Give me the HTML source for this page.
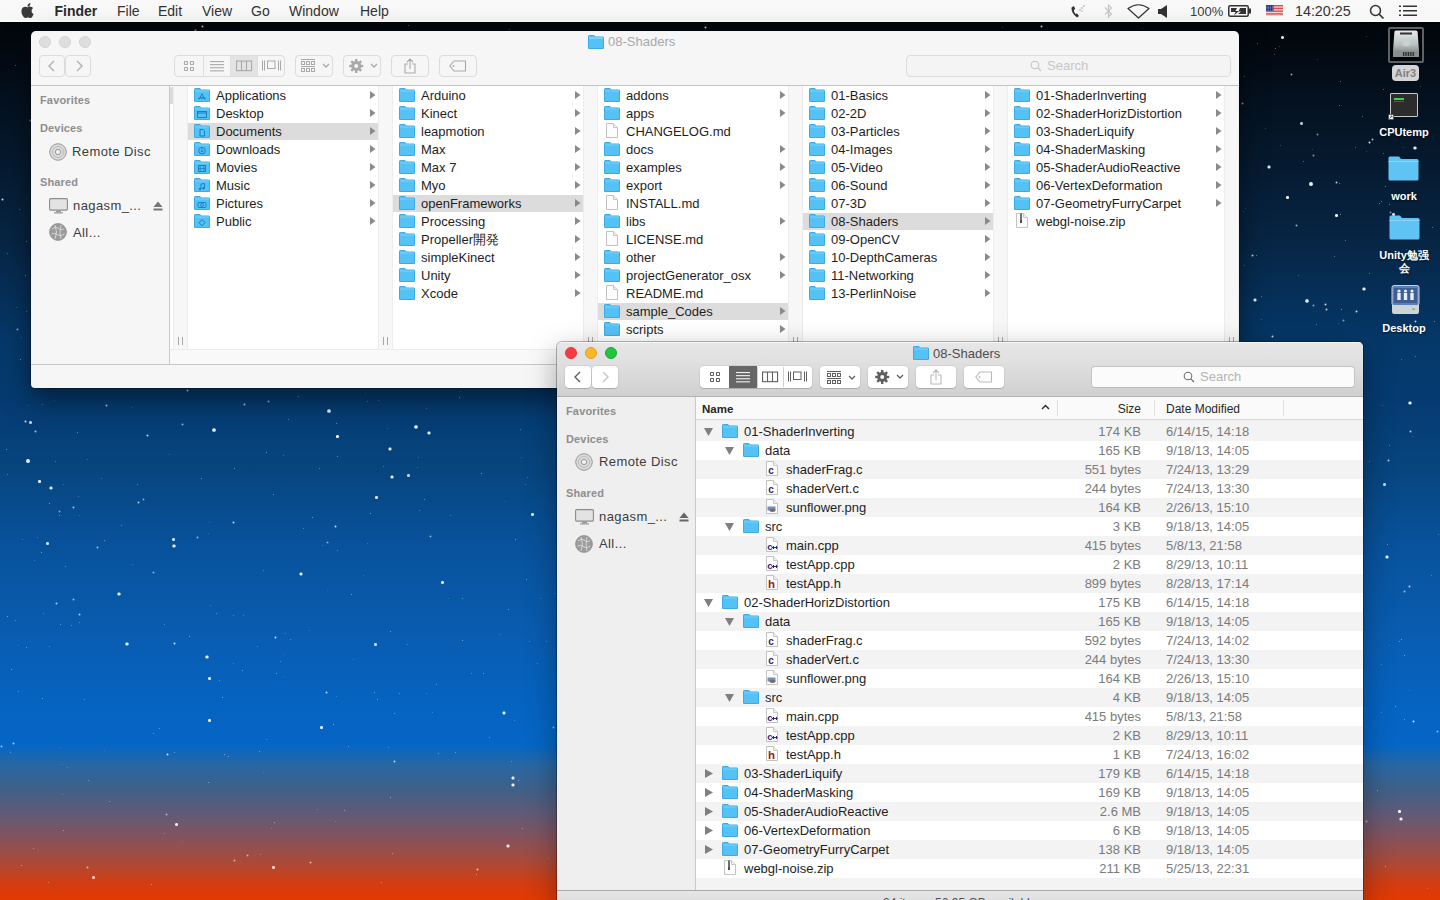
<!DOCTYPE html><html><head><meta charset="utf-8"><style>
*{margin:0;padding:0;box-sizing:border-box}
html,body{width:1440px;height:900px;overflow:hidden}
body{position:relative;font-family:"Liberation Sans",sans-serif;color:#1b1b1b;
background:linear-gradient(180deg,#010409 0px,#02080f 40px,#04111f 100px,#072544 240px,#053869 340px,#053b71 400px,#07457f 470px,#08519a 540px,#095db2 640px,#0563c0 700px,#0566c6 745px,#2867a2 765px,#406088 790px,#625a76 815px,#88525a 840px,#aa4a38 862px,#d43c10 884px,#e23a02 900px)}
.a{position:absolute}
.s{position:absolute;background:#fff;border-radius:50%}
#menubar{position:absolute;left:0;top:0;width:1440px;height:23px;background:linear-gradient(180deg,#f9f9f9 0,#f7f7f7 20px,#fff 21px,#fff 22px,#000 22px)}
.mi{position:absolute;top:3px;font-size:14px;line-height:16px;color:#333;white-space:nowrap}
.t{position:absolute;white-space:nowrap;font-size:13px;line-height:16px;color:#1e1e1e}
.win{position:absolute;overflow:hidden}
.tb{position:absolute;border-radius:4px}
.sh{position:absolute;font-size:11px;font-weight:bold;color:#8e8e8e;line-height:13px;white-space:nowrap;letter-spacing:0.15px}
.si{position:absolute;font-size:13px;color:#3d3d3d;line-height:16px;white-space:nowrap;letter-spacing:0.4px}
.dl{position:absolute;font-size:11px;font-weight:bold;color:#fff;line-height:13px;white-space:nowrap;text-align:center;text-shadow:0 1px 2px rgba(0,0,0,.6)}
</style></head><body><i style="position:absolute;left:0;top:0;width:1px;height:1px;border-radius:50%;box-shadow:466px 155px 0 0px rgba(255,255,255,0.23),772px 341px 0 0px rgba(255,255,255,0.40),54px 400px 0 0px rgba(255,255,255,0.24),611px 740px 0 0px rgba(255,255,255,0.29),904px 845px 0 0px rgba(255,255,255,0.59),67px 767px 0 0px rgba(255,255,255,0.26),170px 291px 0 0.5px rgba(255,255,255,0.56),838px 577px 0 0px rgba(255,255,255,0.42),90px 76px 0 0px rgba(255,255,255,0.47),616px 296px 0 0px rgba(255,255,255,0.38),432px 712px 0 0px rgba(255,255,255,0.30),827px 479px 0 0.5px rgba(255,255,255,0.76),602px 680px 0 0px rgba(255,255,255,0.40),56px 603px 0 0.5px rgba(255,255,255,0.70),1261px 296px 0 0px rgba(255,255,255,0.44),835px 419px 0 0.5px rgba(255,255,255,0.83),683px 599px 0 0px rgba(255,255,255,0.48),932px 884px 0 0px rgba(255,255,255,0.35),963px 44px 0 0px rgba(255,255,255,0.27),169px 75px 0 0.5px rgba(255,255,255,0.55),357px 363px 0 0.5px rgba(255,255,255,0.53),647px 500px 0 0.5px rgba(255,255,255,0.79),1244px 265px 0 0px rgba(255,255,255,0.34),254px 225px 0 0px rgba(255,255,255,0.39),848px 252px 0 0px rgba(255,255,255,0.37),532px 514px 0 1px rgba(255,255,255,0.92),742px 559px 0 0px rgba(255,255,255,0.22),1295px 699px 0 0.5px rgba(255,255,255,0.78),565px 370px 0 0px rgba(255,255,255,0.45),90px 82px 0 0px rgba(255,255,255,0.26),490px 70px 0 0px rgba(255,255,255,0.26),146px 339px 0 0px rgba(255,255,255,0.55),884px 153px 0 0px rgba(255,255,255,0.34),524px 130px 0 0.5px rgba(255,255,255,0.85),671px 443px 0 0px rgba(255,255,255,0.24),493px 253px 0 0.5px rgba(255,255,255,0.56),33px 848px 0 0px rgba(255,255,255,0.42),39px 481px 0 1px rgba(255,255,255,0.97),1003px 250px 0 0px rgba(255,255,255,0.27),1112px 485px 0 0.5px rgba(255,255,255,0.62),321px 727px 0 1px rgba(255,255,255,0.96),1161px 733px 0 0.5px rgba(255,255,255,0.58),745px 332px 0 0px rgba(255,255,255,0.21),402px 248px 0 0px rgba(255,255,255,0.58),644px 835px 0 1px rgba(255,255,255,0.84),317px 220px 0 0px rgba(255,255,255,0.28),899px 804px 0 0px rgba(255,255,255,0.46),1151px 97px 0 0px rgba(255,255,255,0.56),1127px 674px 0 0px rgba(255,255,255,0.27),1136px 312px 0 0.5px rgba(255,255,255,0.84),570px 372px 0 1px rgba(255,255,255,0.93),245px 134px 0 0px rgba(255,255,255,0.56),1161px 151px 0 0.5px rgba(255,255,255,0.84),946px 327px 0 0px rgba(255,255,255,0.25),21px 865px 0 0px rgba(255,255,255,0.57),625px 779px 0 0px rgba(255,255,255,0.30),422px 232px 0 0px rgba(255,255,255,0.30),603px 138px 0 0.5px rgba(255,255,255,0.62),660px 529px 0 0.5px rgba(255,255,255,0.65),1322px 458px 0 0px rgba(255,255,255,0.41),27px 405px 0 0px rgba(255,255,255,0.20),1151px 173px 0 0px rgba(255,255,255,0.49),801px 306px 0 0px rgba(255,255,255,0.42),1129px 116px 0 0px rgba(255,255,255,0.30),399px 693px 0 0px rgba(255,255,255,0.42),882px 462px 0 0px rgba(255,255,255,0.48),651px 486px 0 0px rgba(255,255,255,0.58),1007px 783px 0 0px rgba(255,255,255,0.42),1358px 751px 0 0px rgba(255,255,255,0.25),637px 87px 0 0px rgba(255,255,255,0.23),964px 703px 0 0.5px rgba(255,255,255,0.55),1031px 596px 0 0px rgba(255,255,255,0.55),1393px 214px 0 1px rgba(255,255,255,0.85),702px 881px 0 0px rgba(255,255,255,0.37),742px 318px 0 0px rgba(255,255,255,0.33),1040px 41px 0 0px rgba(255,255,255,0.38),26px 311px 0 0px rgba(255,255,255,0.40),93px 877px 0 1px rgba(255,255,255,0.78),382px 58px 0 0.5px rgba(255,255,255,0.59),187px 390px 0 0.5px rgba(255,255,255,0.79),372px 153px 0 0.5px rgba(255,255,255,0.70),1009px 101px 0 0px rgba(255,255,255,0.48),612px 87px 0 1px rgba(255,255,255,0.91),1154px 97px 0 0.5px rgba(255,255,255,0.52),1242px 417px 0 0px rgba(255,255,255,0.42),1334px 256px 0 0px rgba(255,255,255,0.41),343px 119px 0 0px rgba(255,255,255,0.22),291px 294px 0 0px rgba(255,255,255,0.50),418px 457px 0 0px rgba(255,255,255,0.34),26px 241px 0 0px rgba(255,255,255,0.49),794px 188px 0 0px rgba(255,255,255,0.57),153px 733px 0 0px rgba(255,255,255,0.40),1202px 364px 0 0px rgba(255,255,255,0.48),1415px 321px 0 0.5px rgba(255,255,255,0.75),916px 374px 0 0px rgba(255,255,255,0.22),187px 85px 0 0.5px rgba(255,255,255,0.59),235px 97px 0 0.5px rgba(255,255,255,0.80),966px 268px 0 0px rgba(255,255,255,0.32),662px 160px 0 0px rgba(255,255,255,0.31),1385px 866px 0 0px rgba(255,255,255,0.59),446px 333px 0 0px rgba(255,255,255,0.35),683px 459px 0 0px rgba(255,255,255,0.40),7px 253px 0 0px rgba(255,255,255,0.36),60px 43px 0 0px rgba(255,255,255,0.29),843px 482px 0 0.5px rgba(255,255,255,0.73),1043px 581px 0 0px rgba(255,255,255,0.53),1284px 567px 0 0.5px rgba(255,255,255,0.78),201px 478px 0 0px rgba(255,255,255,0.53),1159px 740px 0 0px rgba(255,255,255,0.56),983px 624px 0 0px rgba(255,255,255,0.21),192px 336px 0 0px rgba(255,255,255,0.53),804px 568px 0 0px rgba(255,255,255,0.47),705px 27px 0 0.5px rgba(255,255,255,0.76),724px 487px 0 0px rgba(255,255,255,0.23),1061px 242px 0 0px rgba(255,255,255,0.31),1050px 202px 0 0.5px rgba(255,255,255,0.84),711px 355px 0 0px rgba(255,255,255,0.47),1104px 558px 0 0px rgba(255,255,255,0.23),212px 244px 0 0.5px rgba(255,255,255,0.61),818px 35px 0 0px rgba(255,255,255,0.31),968px 623px 0 0px rgba(255,255,255,0.32),744px 426px 0 0px rgba(255,255,255,0.25),1287px 197px 0 1px rgba(255,255,255,0.98),25px 421px 0 0.5px rgba(255,255,255,0.84),647px 257px 0 0px rgba(255,255,255,0.58),303px 528px 0 0px rgba(255,255,255,0.41),1372px 139px 0 0.5px rgba(255,255,255,0.68),1277px 633px 0 0px rgba(255,255,255,0.56),700px 46px 0 0px rgba(255,255,255,0.40),649px 285px 0 0px rgba(255,255,255,0.34),455px 752px 0 0px rgba(255,255,255,0.50),1208px 128px 0 1px rgba(255,255,255,0.93),1298px 275px 0 0px rgba(255,255,255,0.36),1438px 534px 0 0px rgba(255,255,255,0.37),396px 66px 0 0px rgba(255,255,255,0.53),383px 466px 0 0px rgba(255,255,255,0.35),1377px 790px 0 0px rgba(255,255,255,0.57),1355px 500px 0 0.5px rgba(255,255,255,0.52),1055px 414px 0 0.5px rgba(255,255,255,0.73),412px 66px 0 1px rgba(255,255,255,0.78),680px 322px 0 0px rgba(255,255,255,0.50),1406px 249px 0 0px rgba(255,255,255,0.32),803px 366px 0 0px rgba(255,255,255,0.26),317px 809px 0 0px rgba(255,255,255,0.26),277px 103px 0 0px rgba(255,255,255,0.24),344px 248px 0 0px rgba(255,255,255,0.55),1080px 381px 0 0px rgba(255,255,255,0.41),543px 317px 0 0px rgba(255,255,255,0.31),1393px 133px 0 0px rgba(255,255,255,0.45),1243px 211px 0 0px rgba(255,255,255,0.30),576px 410px 0 1px rgba(255,255,255,0.96),1257px 43px 0 0px rgba(255,255,255,0.48),1290px 434px 0 0px rgba(255,255,255,0.20),564px 827px 0 0.5px rgba(255,255,255,0.84),358px 118px 0 0px rgba(255,255,255,0.41),982px 839px 0 0px rgba(255,255,255,0.51),659px 502px 0 0px rgba(255,255,255,0.51),335px 821px 0 0px rgba(255,255,255,0.25),363px 575px 0 0px rgba(255,255,255,0.24),101px 478px 0 0px rgba(255,255,255,0.36),322px 545px 0 0px rgba(255,255,255,0.32),663px 854px 0 0.5px rgba(255,255,255,0.67),338px 238px 0 1px rgba(255,255,255,0.93),443px 43px 0 0px rgba(255,255,255,0.47),605px 247px 0 0px rgba(255,255,255,0.57),327px 54px 0 0px rgba(255,255,255,0.37),983px 196px 0 0.5px rgba(255,255,255,0.76),727px 202px 0 1px rgba(255,255,255,0.83),1181px 224px 0 0px rgba(255,255,255,0.50),270px 217px 0 0px rgba(255,255,255,0.47),1366px 151px 0 0px rgba(255,255,255,0.29),1403px 147px 0 0px rgba(255,255,255,0.22),566px 802px 0 0.5px rgba(255,255,255,0.85),1341px 309px 0 0px rgba(255,255,255,0.57),1075px 52px 0 0px rgba(255,255,255,0.35),538px 311px 0 0px rgba(255,255,255,0.20),403px 328px 0 1px rgba(255,255,255,0.78),1389px 204px 0 0px rgba(255,255,255,0.53),1184px 399px 0 0px rgba(255,255,255,0.39),592px 727px 0 0.5px rgba(255,255,255,0.51),50px 78px 0 1px rgba(255,255,255,0.81),392px 853px 0 0px rgba(255,255,255,0.49),456px 263px 0 0px rgba(255,255,255,0.50),1320px 573px 0 1px rgba(255,255,255,0.76),337px 436px 0 1px rgba(255,255,255,0.99),557px 241px 0 0px rgba(255,255,255,0.40),1336px 182px 0 0.5px rgba(255,255,255,0.76),1185px 693px 0 0px rgba(255,255,255,0.33),460px 337px 0 0.5px rgba(255,255,255,0.53),284px 676px 0 0px rgba(255,255,255,0.23),49px 503px 0 0px rgba(255,255,255,0.59),121px 108px 0 0px rgba(255,255,255,0.48),644px 227px 0 0px rgba(255,255,255,0.45),971px 672px 0 0.5px rgba(255,255,255,0.73),174px 752px 0 0px rgba(255,255,255,0.43),537px 663px 0 0px rgba(255,255,255,0.30),353px 157px 0 0.5px rgba(255,255,255,0.70),470px 367px 0 1px rgba(255,255,255,0.88),333px 724px 0 0px rgba(255,255,255,0.60),147px 435px 0 0.5px rgba(255,255,255,0.79),1317px 59px 0 0px rgba(255,255,255,0.25),273px 867px 0 1px rgba(255,255,255,0.84),1247px 413px 0 0px rgba(255,255,255,0.51),1362px 116px 0 0px rgba(255,255,255,0.45),313px 343px 0 0px rgba(255,255,255,0.28),367px 543px 0 0px rgba(255,255,255,0.28),16px 307px 0 0px rgba(255,255,255,0.27),450px 200px 0 0.5px rgba(255,255,255,0.69),91px 112px 0 0px rgba(255,255,255,0.42),920px 103px 0 0px rgba(255,255,255,0.48),590px 269px 0 0px rgba(255,255,255,0.58),450px 515px 0 0px rgba(255,255,255,0.37),284px 654px 0 0px rgba(255,255,255,0.20),1298px 391px 0 0.5px rgba(255,255,255,0.64),1271px 423px 0 0px rgba(255,255,255,0.21),794px 579px 0 0.5px rgba(255,255,255,0.53),896px 345px 0 0px rgba(255,255,255,0.26),408px 475px 0 1px rgba(255,255,255,0.78),706px 721px 0 1px rgba(255,255,255,0.80),182px 841px 0 0px rgba(255,255,255,0.22),1334px 360px 0 0.5px rgba(255,255,255,0.72),1187px 163px 0 0.5px rgba(255,255,255,0.58),582px 757px 0 0.5px rgba(255,255,255,0.56),314px 370px 0 0px rgba(255,255,255,0.35),177px 238px 0 0.5px rgba(255,255,255,0.81),59px 511px 0 0.5px rgba(255,255,255,0.51),1207px 126px 0 0px rgba(255,255,255,0.42),903px 289px 0 0px rgba(255,255,255,0.43),613px 595px 0 0px rgba(255,255,255,0.38),34px 560px 0 0px rgba(255,255,255,0.29),1100px 699px 0 0px rgba(255,255,255,0.27),681px 117px 0 0px rgba(255,255,255,0.37),132px 407px 0 0px rgba(255,255,255,0.22),916px 95px 0 0.5px rgba(255,255,255,0.77),737px 71px 0 0px rgba(255,255,255,0.35),1369px 142px 0 0.5px rgba(255,255,255,0.85),1054px 730px 0 0px rgba(255,255,255,0.59),708px 852px 0 0px rgba(255,255,255,0.52),1340px 81px 0 0px rgba(255,255,255,0.50),1175px 148px 0 0px rgba(255,255,255,0.57),300px 252px 0 0px rgba(255,255,255,0.33),53px 182px 0 0px rgba(255,255,255,0.57),1130px 124px 0 0px rgba(255,255,255,0.45),518px 780px 0 0px rgba(255,255,255,0.55),151px 884px 0 0px rgba(255,255,255,0.52),381px 882px 0 0px rgba(255,255,255,0.51),637px 177px 0 0.5px rgba(255,255,255,0.52),1181px 244px 0 0px rgba(255,255,255,0.59),844px 599px 0 0px rgba(255,255,255,0.20),49px 153px 0 0px rgba(255,255,255,0.37),327px 590px 0 0px rgba(255,255,255,0.20),511px 116px 0 0px rgba(255,255,255,0.29),840px 534px 0 0px rgba(255,255,255,0.45),684px 141px 0 1px rgba(255,255,255,0.81),215px 107px 0 0px rgba(255,255,255,0.55),1126px 372px 0 0px rgba(255,255,255,0.20),929px 511px 0 0px rgba(255,255,255,0.46),639px 836px 0 0px rgba(255,255,255,0.56),63px 484px 0 0px rgba(255,255,255,0.30),84px 699px 0 0px rgba(255,255,255,0.42),1355px 147px 0 0px rgba(255,255,255,0.44),730px 580px 0 0.5px rgba(255,255,255,0.56),446px 284px 0 0px rgba(255,255,255,0.56),1127px 644px 0 0px rgba(255,255,255,0.54),1073px 427px 0 0.5px rgba(255,255,255,0.66),325px 115px 0 0px rgba(255,255,255,0.22),483px 673px 0 0px rgba(255,255,255,0.54),1025px 254px 0 0px rgba(255,255,255,0.37),1135px 477px 0 0px rgba(255,255,255,0.46),1390px 212px 0 0.5px rgba(255,255,255,0.51),375px 228px 0 0.5px rgba(255,255,255,0.83),1074px 307px 0 0.5px rgba(255,255,255,0.61),344px 810px 0 0px rgba(255,255,255,0.47),1410px 431px 0 0.5px rgba(255,255,255,0.74),1235px 403px 0 0.5px rgba(255,255,255,0.70),443px 208px 0 0px rgba(255,255,255,0.23),1312px 149px 0 0px rgba(255,255,255,0.24),1338px 323px 0 0px rgba(255,255,255,0.21),60px 624px 0 0px rgba(255,255,255,0.48),1061px 81px 0 0px rgba(255,255,255,0.35),1177px 734px 0 0.5px rgba(255,255,255,0.52),1250px 816px 0 0px rgba(255,255,255,0.28),161px 54px 0 0.5px rgba(255,255,255,0.78),913px 739px 0 0px rgba(255,255,255,0.31),144px 109px 0 0.5px rgba(255,255,255,0.57),460px 391px 0 0px rgba(255,255,255,0.30),407px 644px 0 0px rgba(255,255,255,0.33),1388px 460px 0 0.5px rgba(255,255,255,0.72),45px 382px 0 0px rgba(255,255,255,0.51),499px 634px 0 0px rgba(255,255,255,0.29),1242px 103px 0 0.5px rgba(255,255,255,0.56),2px 199px 0 0.5px rgba(255,255,255,0.84),6px 449px 0 0px rgba(255,255,255,0.52),266px 452px 0 0px rgba(255,255,255,0.53),309px 630px 0 0px rgba(255,255,255,0.24),917px 94px 0 0.5px rgba(255,255,255,0.74),1133px 568px 0 0px rgba(255,255,255,0.36),1279px 46px 0 0px rgba(255,255,255,0.31),1298px 458px 0 0px rgba(255,255,255,0.55),336px 423px 0 0px rgba(255,255,255,0.50),1084px 584px 0 0px rgba(255,255,255,0.33),224px 754px 0 0px rgba(255,255,255,0.50),244px 404px 0 0.5px rgba(255,255,255,0.70),182px 424px 0 0.5px rgba(255,255,255,0.58),276px 285px 0 0.5px rgba(255,255,255,0.80),223px 159px 0 0px rgba(255,255,255,0.33),752px 163px 0 0px rgba(255,255,255,0.28),1404px 655px 0 0px rgba(255,255,255,0.58),146px 357px 0 1px rgba(255,255,255,0.95),1056px 401px 0 0px rgba(255,255,255,0.46),154px 203px 0 0px rgba(255,255,255,0.21),575px 709px 0 0px rgba(255,255,255,0.40),911px 425px 0 0px rgba(255,255,255,0.44),583px 666px 0 0.5px rgba(255,255,255,0.65),827px 673px 0 0px rgba(255,255,255,0.29),1040px 786px 0 0.5px rgba(255,255,255,0.80),979px 580px 0 0px rgba(255,255,255,0.33),905px 109px 0 0px rgba(255,255,255,0.51),1027px 569px 0 0px rgba(255,255,255,0.37),655px 562px 0 0px rgba(255,255,255,0.47),1339px 183px 0 0px rgba(255,255,255,0.51),560px 448px 0 1px rgba(255,255,255,0.76),782px 163px 0 0.5px rgba(255,255,255,0.83),748px 112px 0 0px rgba(255,255,255,0.42),1033px 468px 0 0px rgba(255,255,255,0.53),751px 379px 0 1px rgba(255,255,255,0.80),985px 364px 0 0.5px rgba(255,255,255,0.54),1418px 332px 0 0px rgba(255,255,255,0.31),576px 36px 0 0px rgba(255,255,255,0.37),1005px 329px 0 0px rgba(255,255,255,0.29),1068px 838px 0 0px rgba(255,255,255,0.52),564px 208px 0 0px rgba(255,255,255,0.51),1166px 573px 0 0px rgba(255,255,255,0.42),920px 733px 0 0.5px rgba(255,255,255,0.66),424px 499px 0 0px rgba(255,255,255,0.53),511px 761px 0 0px rgba(255,255,255,0.35),365px 393px 0 0px rgba(255,255,255,0.20),1039px 268px 0 0px rgba(255,255,255,0.32),691px 395px 0 0px rgba(255,255,255,0.46),522px 828px 0 0px rgba(255,255,255,0.53),1304px 703px 0 0px rgba(255,255,255,0.53),912px 37px 0 0px rgba(255,255,255,0.58),945px 241px 0 0px rgba(255,255,255,0.26),336px 696px 0 0px rgba(255,255,255,0.26),1302px 710px 0 0px rgba(255,255,255,0.56),876px 701px 0 0px rgba(255,255,255,0.56),1135px 750px 0 0px rgba(255,255,255,0.48),764px 666px 0 0px rgba(255,255,255,0.55),799px 253px 0 0px rgba(255,255,255,0.26),710px 75px 0 0px rgba(255,255,255,0.26),708px 455px 0 0px rgba(255,255,255,0.55),10px 752px 0 0px rgba(255,255,255,0.43),958px 752px 0 0px rgba(255,255,255,0.37),1383px 89px 0 0px rgba(255,255,255,0.45),41px 552px 0 0px rgba(255,255,255,0.57),476px 874px 0 0px rgba(255,255,255,0.56),49px 646px 0 0px rgba(255,255,255,0.34),1241px 341px 0 0px rgba(255,255,255,0.41),1110px 206px 0 0px rgba(255,255,255,0.37),798px 740px 0 0px rgba(255,255,255,0.53),581px 460px 0 0px rgba(255,255,255,0.40),1404px 591px 0 0.5px rgba(255,255,255,0.62),457px 283px 0 0px rgba(255,255,255,0.45),1129px 59px 0 0.5px rgba(255,255,255,0.81),785px 67px 0 0px rgba(255,255,255,0.20),274px 822px 0 0px rgba(255,255,255,0.52),1310px 554px 0 0px rgba(255,255,255,0.45),1003px 540px 0 0px rgba(255,255,255,0.29),960px 421px 0 0.5px rgba(255,255,255,0.54),261px 56px 0 0.5px rgba(255,255,255,0.82),944px 343px 0 0.5px rgba(255,255,255,0.78),809px 247px 0 0px rgba(255,255,255,0.37),459px 397px 0 0px rgba(255,255,255,0.57),79px 515px 0 0px rgba(255,255,255,0.25),1167px 522px 0 0.5px rgba(255,255,255,0.66),20px 359px 0 0px rgba(255,255,255,0.58),1412px 436px 0 0px rgba(255,255,255,0.24),928px 208px 0 0px rgba(255,255,255,0.21),7px 616px 0 0px rgba(255,255,255,0.59),26px 647px 0 0px rgba(255,255,255,0.49),270px 67px 0 0.5px rgba(255,255,255,0.75),1232px 656px 0 0px rgba(255,255,255,0.45),1021px 423px 0 1px rgba(255,255,255,0.81),1389px 645px 0 0px rgba(255,255,255,0.21),937px 732px 0 0px rgba(255,255,255,0.32),1050px 168px 0 0.5px rgba(255,255,255,0.67),86px 342px 0 0px rgba(255,255,255,0.38),975px 149px 0 0.5px rgba(255,255,255,0.63),929px 569px 0 0px rgba(255,255,255,0.35),1132px 842px 0 0px rgba(255,255,255,0.32),87px 867px 0 0.5px rgba(255,255,255,0.62),872px 870px 0 0px rgba(255,255,255,0.32),986px 545px 0 0.5px rgba(255,255,255,0.78),408px 25px 0 0px rgba(255,255,255,0.37),845px 731px 0 0.5px rgba(255,255,255,0.51),1200px 727px 0 0.5px rgba(255,255,255,0.70),394px 761px 0 0.5px rgba(255,255,255,0.74),1316px 324px 0 0px rgba(255,255,255,0.42),1148px 198px 0 0.5px rgba(255,255,255,0.83),337px 550px 0 0px rgba(255,255,255,0.39),297px 245px 0 0.5px rgba(255,255,255,0.78),662px 100px 0 0.5px rgba(255,255,255,0.77),335px 526px 0 0.5px rgba(255,255,255,0.81),751px 437px 0 0px rgba(255,255,255,0.28),277px 180px 0 0.5px rgba(255,255,255,0.63),813px 373px 0 0px rgba(255,255,255,0.26),153px 572px 0 0.5px rgba(255,255,255,0.55),860px 323px 0 0px rgba(255,255,255,0.21),48px 882px 0 0px rgba(255,255,255,0.43),377px 699px 0 0px rgba(255,255,255,0.58),1105px 733px 0 1px rgba(255,255,255,0.81),55px 198px 0 0px rgba(255,255,255,0.23),73px 507px 0 0.5px rgba(255,255,255,0.66),861px 368px 0 0px rgba(255,255,255,0.58),370px 513px 0 0px rgba(255,255,255,0.58),964px 364px 0 0px rgba(255,255,255,0.26),56px 246px 0 0px rgba(255,255,255,0.56),1303px 749px 0 0px rgba(255,255,255,0.51),1022px 584px 0 1px rgba(255,255,255,0.76),209px 678px 0 1px rgba(255,255,255,0.92),430px 536px 0 0.5px rgba(255,255,255,0.54),466px 247px 0 0px rgba(255,255,255,0.39),243px 231px 0 0px rgba(255,255,255,0.47),18px 645px 0 0px rgba(255,255,255,0.21),1336px 215px 0 1px rgba(255,255,255,0.97),1280px 145px 0 0px rgba(255,255,255,0.24),1337px 753px 0 0px rgba(255,255,255,0.38),489px 737px 0 0px rgba(255,255,255,0.45),206px 216px 0 0px rgba(255,255,255,0.49),797px 149px 0 0.5px rgba(255,255,255,0.59),593px 159px 0 0px rgba(255,255,255,0.54),482px 169px 0 0px rgba(255,255,255,0.33),1301px 123px 0 1px rgba(255,255,255,0.76),1289px 603px 0 0px rgba(255,255,255,0.39),412px 247px 0 0px rgba(255,255,255,0.35),1427px 888px 0 0px rgba(255,255,255,0.32),1291px 74px 0 0.5px rgba(255,255,255,0.60),1409px 38px 0 0.5px rgba(255,255,255,0.62),202px 26px 0 0.5px rgba(255,255,255,0.68),268px 401px 0 0.5px rgba(255,255,255,0.58),823px 144px 0 0px rgba(255,255,255,0.51),1025px 194px 0 0px rgba(255,255,255,0.23),876px 453px 0 0px rgba(255,255,255,0.28),882px 637px 0 0.5px rgba(255,255,255,0.70),291px 81px 0 0.5px rgba(255,255,255,0.64),1039px 72px 0 0.5px rgba(255,255,255,0.62),1256px 255px 0 0px rgba(255,255,255,0.53),529px 166px 0 0px rgba(255,255,255,0.44),7px 474px 0 0px rgba(255,255,255,0.41),174px 643px 0 0.5px rgba(255,255,255,0.80),462px 640px 0 0px rgba(255,255,255,0.50),88px 780px 0 0px rgba(255,255,255,0.41),764px 489px 0 0px rgba(255,255,255,0.59),322px 182px 0 0px rgba(255,255,255,0.30),1177px 50px 0 0px rgba(255,255,255,0.48),281px 39px 0 0px rgba(255,255,255,0.43),753px 632px 0 0px rgba(255,255,255,0.55),1033px 63px 0 0px rgba(255,255,255,0.40),721px 266px 0 0px rgba(255,255,255,0.36),197px 537px 0 0.5px rgba(255,255,255,0.55),825px 671px 0 0px rgba(255,255,255,0.53),1350px 361px 0 0px rgba(255,255,255,0.54),757px 367px 0 1px rgba(255,255,255,0.94),488px 232px 0 0px rgba(255,255,255,0.37),1413px 721px 0 0.5px rgba(255,255,255,0.79),1221px 70px 0 0px rgba(255,255,255,0.58),1345px 240px 0 0px rgba(255,255,255,0.45),525px 484px 0 0px rgba(255,255,255,0.37),727px 42px 0 0px rgba(255,255,255,0.59),1118px 835px 0 0.5px rgba(255,255,255,0.81),1274px 54px 0 0px rgba(255,255,255,0.31),977px 261px 0 0px rgba(255,255,255,0.57),895px 241px 0 0px rgba(255,255,255,0.37),1369px 273px 0 0px rgba(255,255,255,0.46),173px 539px 0 1px rgba(255,255,255,0.88),387px 428px 0 0px rgba(255,255,255,0.26),178px 138px 0 0px rgba(255,255,255,0.36),415px 235px 0 0px rgba(255,255,255,0.42),1209px 552px 0 0px rgba(255,255,255,0.46),290px 639px 0 0px rgba(255,255,255,0.42),882px 430px 0 0px rgba(255,255,255,0.30),319px 468px 0 0px rgba(255,255,255,0.43),17px 329px 0 0.5px rgba(255,255,255,0.58),802px 450px 0 0px rgba(255,255,255,0.60),426px 693px 0 0px rgba(255,255,255,0.23),1255px 405px 0 0px rgba(255,255,255,0.36),633px 661px 0 0px rgba(255,255,255,0.29),1381px 664px 0 0px rgba(255,255,255,0.33),508px 609px 0 0px rgba(255,255,255,0.54),1183px 472px 0 0.5px rgba(255,255,255,0.76),1094px 436px 0 0.5px rgba(255,255,255,0.75),1317px 134px 0 0.5px rgba(255,255,255,0.50),1103px 531px 0 0px rgba(255,255,255,0.59),824px 386px 0 0.5px rgba(255,255,255,0.81),875px 353px 0 0px rgba(255,255,255,0.38),1041px 278px 0 0px rgba(255,255,255,0.42),554px 303px 0 0.5px rgba(255,255,255,0.80),719px 409px 0 0px rgba(255,255,255,0.32),209px 522px 0 0px rgba(255,255,255,0.24),1325px 304px 0 0.5px rgba(255,255,255,0.79),1381px 201px 0 0px rgba(255,255,255,0.56),15px 65px 0 0px rgba(255,255,255,0.40),1325px 694px 0 0px rgba(255,255,255,0.60),745px 472px 0 0px rgba(255,255,255,0.36),515px 539px 0 0px rgba(255,255,255,0.58),974px 479px 0 0px rgba(255,255,255,0.35),577px 510px 0 0px rgba(255,255,255,0.55),1389px 445px 0 0px rgba(255,255,255,0.45),1434px 321px 0 0px rgba(255,255,255,0.53),246px 299px 0 1px rgba(255,255,255,0.96),738px 120px 0 0.5px rgba(255,255,255,0.74),1182px 882px 0 0px rgba(255,255,255,0.26),417px 467px 0 0px rgba(255,255,255,0.28),263px 570px 0 0px rgba(255,255,255,0.34),1431px 575px 0 0px rgba(255,255,255,0.36),1134px 290px 0 0px rgba(255,255,255,0.20),438px 753px 0 0px rgba(255,255,255,0.47),283px 455px 0 0px rgba(255,255,255,0.31),931px 484px 0 1px rgba(255,255,255,0.89),592px 129px 0 0px rgba(255,255,255,0.50),154px 111px 0 0px rgba(255,255,255,0.41),1185px 555px 0 0.5px rgba(255,255,255,0.52),18px 691px 0 0px rgba(255,255,255,0.49),510px 171px 0 0px rgba(255,255,255,0.24),1302px 528px 0 0px rgba(255,255,255,0.38),555px 71px 0 0.5px rgba(255,255,255,0.70),1382px 405px 0 0px rgba(255,255,255,0.30),63px 830px 0 0px rgba(255,255,255,0.56),1175px 287px 0 0px rgba(255,255,255,0.58),561px 646px 0 0px rgba(255,255,255,0.32),1260px 443px 0 0.5px rgba(255,255,255,0.59),250px 334px 0 0px rgba(255,255,255,0.59),419px 510px 0 0px rgba(255,255,255,0.41),555px 373px 0 0px rgba(255,255,255,0.25),1189px 328px 0 0px rgba(255,255,255,0.28),408px 229px 0 0px rgba(255,255,255,0.47),492px 159px 0 0.5px rgba(255,255,255,0.53),388px 747px 0 0px rgba(255,255,255,0.38),1204px 721px 0 0px rgba(255,255,255,0.34),1040px 350px 0 1px rgba(255,255,255,0.80),1369px 461px 0 0px rgba(255,255,255,0.38),189px 636px 0 0px rgba(255,255,255,0.56),846px 343px 0 0px rgba(255,255,255,0.44),739px 494px 0 0px rgba(255,255,255,0.51),554px 593px 0 0px rgba(255,255,255,0.32),562px 99px 0 0px rgba(255,255,255,0.54),462px 598px 0 0px rgba(255,255,255,0.42),521px 457px 0 0px rgba(255,255,255,0.23),448px 220px 0 0px rgba(255,255,255,0.49),407px 373px 0 0.5px rgba(255,255,255,0.77),1271px 770px 0 0px rgba(255,255,255,0.31),43px 613px 0 0px rgba(255,255,255,0.34),594px 595px 0 0px rgba(255,255,255,0.30),1219px 329px 0 0px rgba(255,255,255,0.27),166px 814px 0 0.5px rgba(255,255,255,0.51),58px 164px 0 0px rgba(255,255,255,0.32),548px 58px 0 0px rgba(255,255,255,0.46),259px 751px 0 0px rgba(255,255,255,0.49),367px 401px 0 0px rgba(255,255,255,0.34),1px 746px 0 0.5px rgba(255,255,255,0.60),62px 764px 0 0px rgba(255,255,255,0.22),352px 120px 0 0.5px rgba(255,255,255,0.57),1317px 673px 0 0px rgba(255,255,255,0.48),567px 671px 0 0.5px rgba(255,255,255,0.60),1340px 623px 0 0.5px rgba(255,255,255,0.79),904px 416px 0 0px rgba(255,255,255,0.48),617px 467px 0 1px rgba(255,255,255,0.78),1097px 62px 0 0.5px rgba(255,255,255,0.78),376px 497px 0 1px rgba(255,255,255,0.91),783px 240px 0 0px rgba(255,255,255,0.34),593px 198px 0 0px rgba(255,255,255,0.25),1018px 605px 0 0px rgba(255,255,255,0.30),742px 409px 0 1px rgba(255,255,255,0.84),811px 313px 0 0.5px rgba(255,255,255,0.69),1095px 171px 0 0px rgba(255,255,255,0.44),664px 687px 0 0.5px rgba(255,255,255,0.54),417px 336px 0 0px rgba(255,255,255,0.22),404px 195px 0 0.5px rgba(255,255,255,0.66),163px 305px 0 0px rgba(255,255,255,0.35),242px 86px 0 0px rgba(255,255,255,0.60),1081px 97px 0 0.5px rgba(255,255,255,0.84),812px 118px 0 0px rgba(255,255,255,0.37),273px 494px 0 0px rgba(255,255,255,0.57),928px 568px 0 1px rgba(255,255,255,0.91),362px 237px 0 0px rgba(255,255,255,0.21),1115px 751px 0 0px rgba(255,255,255,0.27),919px 756px 0 1px rgba(255,255,255,0.79),1130px 743px 0 0.5px rgba(255,255,255,0.61),266px 739px 0 0px rgba(255,255,255,0.35),794px 344px 0 0.5px rgba(255,255,255,0.58),59px 515px 0 0px rgba(255,255,255,0.53),1016px 808px 0 0px rgba(255,255,255,0.40),227px 283px 0 0px rgba(255,255,255,0.23),991px 166px 0 0px rgba(255,255,255,0.59),129px 59px 0 0px rgba(255,255,255,0.28),1041px 26px 0 0.5px rgba(255,255,255,0.80),1133px 392px 0 0px rgba(255,255,255,0.46),741px 389px 0 0px rgba(255,255,255,0.38),959px 739px 0 0.5px rgba(255,255,255,0.56),426px 408px 0 0px rgba(255,255,255,0.34),281px 98px 0 0px rgba(255,255,255,0.38),1399px 811px 0 1px rgba(255,255,255,0.99),893px 726px 0 0px rgba(255,255,255,0.47),877px 281px 0 0px rgba(255,255,255,0.58),692px 585px 0 0px rgba(255,255,255,0.34),1275px 48px 0 0px rgba(255,255,255,0.47),644px 98px 0 0px rgba(255,255,255,0.35),836px 385px 0 0px rgba(255,255,255,0.43),571px 123px 0 0px rgba(255,255,255,0.56),789px 121px 0 0.5px rgba(255,255,255,0.59),137px 484px 0 0px rgba(255,255,255,0.40),798px 220px 0 0px rgba(255,255,255,0.25),739px 534px 0 0px rgba(255,255,255,0.36),106px 405px 0 0.5px rgba(255,255,255,0.69),1029px 679px 0 0px rgba(255,255,255,0.60),1039px 112px 0 0.5px rgba(255,255,255,0.64),247px 855px 0 0.5px rgba(255,255,255,0.55),1118px 74px 0 0px rgba(255,255,255,0.35),22px 539px 0 0px rgba(255,255,255,0.32),1019px 393px 0 0.5px rgba(255,255,255,0.72),1256px 512px 0 0.5px rgba(255,255,255,0.80),242px 670px 0 0px rgba(255,255,255,0.51),980px 739px 0 0px rgba(255,255,255,0.35),1062px 845px 0 0px rgba(255,255,255,0.44),143px 499px 0 0.5px rgba(255,255,255,0.54),1333px 609px 0 0px rgba(255,255,255,0.28),643px 750px 0 0px rgba(255,255,255,0.25),30px 120px 0 0.5px rgba(255,255,255,0.56),798px 275px 0 0px rgba(255,255,255,0.35),208px 782px 0 0px rgba(255,255,255,0.52),1366px 36px 0 0px rgba(255,255,255,0.26),723px 780px 0 0px rgba(255,255,255,0.27),1178px 612px 0 0px rgba(255,255,255,0.39),228px 756px 0 0px rgba(255,255,255,0.55),880px 90px 0 0px rgba(255,255,255,0.29),1287px 534px 0 0px rgba(255,255,255,0.27),520px 429px 0 0px rgba(255,255,255,0.36),509px 29px 0 0px rgba(255,255,255,0.33),30px 422px 0 1px rgba(255,255,255,0.76),210px 605px 0 0px rgba(255,255,255,0.31),720px 251px 0 0px rgba(255,255,255,0.41),807px 692px 0 0.5px rgba(255,255,255,0.77),912px 574px 0 0px rgba(255,255,255,0.31),1145px 780px 0 0px rgba(255,255,255,0.32),1099px 664px 0 0px rgba(255,255,255,0.45),505px 501px 0 0px rgba(255,255,255,0.22),486px 304px 0 1px rgba(255,255,255,0.87),529px 235px 0 0px rgba(255,255,255,0.34),195px 30px 0 0.5px rgba(255,255,255,0.66),642px 517px 0 0px rgba(255,255,255,0.27),96px 285px 0 0px rgba(255,255,255,0.49),1327px 529px 0 0px rgba(255,255,255,0.27),1115px 395px 0 0.5px rgba(255,255,255,0.52),371px 44px 0 0px rgba(255,255,255,0.31),1014px 213px 0 0px rgba(255,255,255,0.28),868px 772px 0 0px rgba(255,255,255,0.49),1387px 544px 0 0px rgba(255,255,255,0.52),1261px 319px 0 0px rgba(255,255,255,0.28),773px 782px 0 1px rgba(255,255,255,0.80),471px 673px 0 0px rgba(255,255,255,0.36),978px 317px 0 0px rgba(255,255,255,0.37),65px 566px 0 0px rgba(255,255,255,0.40),861px 247px 0 0px rgba(255,255,255,0.21),1332px 513px 0 1px rgba(255,255,255,0.76),884px 651px 0 0px rgba(255,255,255,0.24),225px 148px 0 0.5px rgba(255,255,255,0.53),1172px 391px 0 0px rgba(255,255,255,0.44),799px 593px 0 0px rgba(255,255,255,0.33),1067px 247px 0 0.5px rgba(255,255,255,0.77),1117px 292px 0 0.5px rgba(255,255,255,0.84),653px 265px 0 0px rgba(255,255,255,0.58),190px 32px 0 0px rgba(255,255,255,0.46),1115px 338px 0 1px rgba(255,255,255,0.81),1089px 102px 0 0px rgba(255,255,255,0.25),87px 459px 0 0px rgba(255,255,255,0.27),1353px 341px 0 0px rgba(255,255,255,0.27),42px 698px 0 0px rgba(255,255,255,0.59),718px 575px 0 0px rgba(255,255,255,0.52),663px 304px 0 0.5px rgba(255,255,255,0.54),1056px 81px 0 0px rgba(255,255,255,0.36),1244px 76px 0 0px rgba(255,255,255,0.36),1324px 842px 0 0px rgba(255,255,255,0.30),378px 400px 0 0px rgba(255,255,255,0.28),1093px 581px 0 0px rgba(255,255,255,0.60),312px 517px 0 0px rgba(255,255,255,0.55),1252px 255px 0 0.5px rgba(255,255,255,0.79),407px 311px 0 0px rgba(255,255,255,0.56),233px 615px 0 0px rgba(255,255,255,0.38),1272px 336px 0 0.5px rgba(255,255,255,0.80),263px 772px 0 0px rgba(255,255,255,0.21),1313px 155px 0 0.5px rgba(255,255,255,0.53),243px 615px 0 0px rgba(255,255,255,0.34),1323px 644px 0 0.5px rgba(255,255,255,0.84),47px 227px 0 0.5px rgba(255,255,255,0.74),55px 461px 0 0px rgba(255,255,255,0.37),151px 41px 0 1px rgba(255,255,255,0.83),1265px 128px 0 0px rgba(255,255,255,0.25),617px 179px 0 0px rgba(255,255,255,0.26),1063px 458px 0 0px rgba(255,255,255,0.34),310px 862px 0 0.5px rgba(255,255,255,0.60),255px 253px 0 0px rgba(255,255,255,0.22),733px 377px 0 0px rgba(255,255,255,0.35),15px 620px 0 0px rgba(255,255,255,0.42),790px 622px 0 1px rgba(255,255,255,0.97),1034px 370px 0 0px rgba(255,255,255,0.37),1401px 359px 0 0px rgba(255,255,255,0.36),880px 350px 0 0px rgba(255,255,255,0.28),167px 754px 0 0.5px rgba(255,255,255,0.82),71px 625px 0 0px rgba(255,255,255,0.46),790px 297px 0 1px rgba(255,255,255,0.75),1075px 763px 0 0px rgba(255,255,255,0.44),1432px 227px 0 0px rgba(255,255,255,0.50),546px 641px 0 0px rgba(255,255,255,0.41),882px 610px 0 0px rgba(255,255,255,0.45),782px 217px 0 0px rgba(255,255,255,0.31),1309px 434px 0 0.5px rgba(255,255,255,0.68),686px 216px 0 0px rgba(255,255,255,0.57),761px 478px 0 0px rgba(255,255,255,0.53),344px 173px 0 0.5px rgba(255,255,255,0.66),922px 741px 0 0.5px rgba(255,255,255,0.80),62px 354px 0 0.5px rgba(255,255,255,0.79),177px 157px 0 0px rgba(255,255,255,0.24),514px 720px 0 0px rgba(255,255,255,0.38),127px 367px 0 1px rgba(255,255,255,0.92),647px 438px 0 0.5px rgba(255,255,255,0.77),216px 613px 0 0px rgba(255,255,255,0.41),342px 345px 0 0px rgba(255,255,255,0.35),26px 198px 0 0px rgba(255,255,255,0.22),257px 646px 0 0px rgba(255,255,255,0.33),348px 746px 0 0px rgba(255,255,255,0.45),1237px 199px 0 0px rgba(255,255,255,0.52),890px 346px 0 0px rgba(255,255,255,0.38),529px 641px 0 0px rgba(255,255,255,0.36),933px 726px 0 0px rgba(255,255,255,0.35),1399px 641px 0 0px rgba(255,255,255,0.47),474px 85px 0 0.5px rgba(255,255,255,0.63),757px 454px 0 0.5px rgba(255,255,255,0.76),37px 537px 0 0px rgba(255,255,255,0.38),1209px 383px 0 0px rgba(255,255,255,0.56),633px 449px 0 0px rgba(255,255,255,0.53),965px 665px 0 0px rgba(255,255,255,0.22),979px 504px 0 0.5px rgba(255,255,255,0.77),170px 215px 0 0px rgba(255,255,255,0.53),146px 100px 0 0.5px rgba(255,255,255,0.70),79px 614px 0 0.5px rgba(255,255,255,0.67),79px 622px 0 0px rgba(255,255,255,0.43),1437px 731px 0 0.5px rgba(255,255,255,0.55),481px 473px 0 0px rgba(255,255,255,0.60),396px 251px 0 0px rgba(255,255,255,0.30),1237px 505px 0 0px rgba(255,255,255,0.37),74px 288px 0 0.5px rgba(255,255,255,0.78),1234px 247px 0 0px rgba(255,255,255,0.22),773px 348px 0 0px rgba(255,255,255,0.40),841px 341px 0 0.5px rgba(255,255,255,0.57),1324px 506px 0 0px rgba(255,255,255,0.33),768px 378px 0 0px rgba(255,255,255,0.33),394px 713px 0 0px rgba(255,255,255,0.48),1156px 537px 0 0px rgba(255,255,255,0.57),625px 578px 0 0px rgba(255,255,255,0.55),104px 540px 0 0px rgba(255,255,255,0.57),808px 717px 0 0px rgba(255,255,255,0.47),972px 279px 0 0px rgba(255,255,255,0.54),145px 106px 0 0.5px rgba(255,255,255,0.83),597px 595px 0 0px rgba(255,255,255,0.56),988px 158px 0 0px rgba(255,255,255,0.48),60px 748px 0 0px rgba(255,255,255,0.29),838px 300px 0 0px rgba(255,255,255,0.26),1313px 305px 0 0.5px rgba(255,255,255,0.55),47px 353px 0 0px rgba(255,255,255,0.29),786px 105px 0 0px rgba(255,255,255,0.49),619px 612px 0 0px rgba(255,255,255,0.53),176px 824px 0 1px rgba(255,255,255,0.88),419px 325px 0 0.5px rgba(255,255,255,0.67),1339px 105px 0 0px rgba(255,255,255,0.55),861px 492px 0 0px rgba(255,255,255,0.26),390px 797px 0 0px rgba(255,255,255,0.57),47px 543px 0 1px rgba(255,255,255,0.84),1360px 593px 0 0px rgba(255,255,255,0.33),647px 238px 0 0.5px rgba(255,255,255,0.56),1134px 282px 0 0px rgba(255,255,255,0.42),138px 502px 0 0.5px rgba(255,255,255,0.71),664px 53px 0 0px rgba(255,255,255,0.24),931px 138px 0 0px rgba(255,255,255,0.34),540px 598px 0 0px rgba(255,255,255,0.27),1356px 311px 0 0.5px rgba(255,255,255,0.81),692px 153px 0 0px rgba(255,255,255,0.55),169px 454px 0 0px rgba(255,255,255,0.25),674px 166px 0 0px rgba(255,255,255,0.40),528px 195px 0 0px rgba(255,255,255,0.28),183px 232px 0 0.5px rgba(255,255,255,0.68),1282px 37px 0 1px rgba(255,255,255,0.87),1139px 518px 0 0px rgba(255,255,255,0.29),1080px 157px 0 0px rgba(255,255,255,0.21),566px 473px 0 0px rgba(255,255,255,0.56),121px 525px 0 0px rgba(255,255,255,0.44),1129px 640px 0 0px rgba(255,255,255,0.30),890px 623px 0 0.5px rgba(255,255,255,0.62),1167px 424px 0 1px rgba(255,255,255,0.75),1354px 381px 0 0px rgba(255,255,255,0.24),353px 659px 0 0px rgba(255,255,255,0.26),496px 146px 0 0px rgba(255,255,255,0.29),477px 869px 0 0.5px rgba(255,255,255,0.67),716px 699px 0 0.5px rgba(255,255,255,0.76),916px 196px 0 0px rgba(255,255,255,0.54),1133px 104px 0 0.5px rgba(255,255,255,0.62),234px 860px 0 0.5px rgba(255,255,255,0.55),1193px 836px 0 0.5px rgba(255,255,255,0.79),1155px 535px 0 0px rgba(255,255,255,0.53),1384px 484px 0 1px rgba(255,255,255,0.78),1395px 706px 0 0px rgba(255,255,255,0.54),334px 195px 0 0px rgba(255,255,255,0.29),709px 810px 0 0.5px rgba(255,255,255,0.64),1129px 711px 0 0px rgba(255,255,255,0.58),1189px 376px 0 0px rgba(255,255,255,0.46),1204px 318px 0 0px rgba(255,255,255,0.53),1142px 28px 0 0px rgba(255,255,255,0.21),159px 728px 0 0px rgba(255,255,255,0.44),659px 314px 0 0px rgba(255,255,255,0.34),1216px 560px 0 0px rgba(255,255,255,0.24),390px 631px 0 0px rgba(255,255,255,0.46),1162px 129px 0 0px rgba(255,255,255,0.22),1185px 183px 0 0px rgba(255,255,255,0.58),522px 218px 0 0.5px rgba(255,255,255,0.71),1287px 366px 0 0px rgba(255,255,255,0.58),1196px 164px 0 0px rgba(255,255,255,0.20),1166px 241px 0 0px rgba(255,255,255,0.24),796px 771px 0 0px rgba(255,255,255,0.57),1287px 601px 0 0px rgba(255,255,255,0.45),952px 571px 0 0px rgba(255,255,255,0.41),1202px 616px 0 0px rgba(255,255,255,0.38),1082px 796px 0 0.5px rgba(255,255,255,0.51),468px 143px 0 1px rgba(255,255,255,0.97),208px 533px 0 0px rgba(255,255,255,0.22),565px 671px 0 0px rgba(255,255,255,0.31),1098px 276px 0 0px rgba(255,255,255,0.37),1409px 586px 0 0.5px rgba(255,255,255,0.74),548px 858px 0 0px rgba(255,255,255,0.31),233px 522px 0 0.5px rgba(255,255,255,0.78),500px 145px 0 0px rgba(255,255,255,0.55),233px 663px 0 0px rgba(255,255,255,0.32),77px 282px 0 0px rgba(255,255,255,0.59),1385px 186px 0 0px rgba(255,255,255,0.58),284px 302px 0 0px rgba(255,255,255,0.24),375px 365px 0 0px rgba(255,255,255,0.59),384px 201px 0 0.5px rgba(255,255,255,0.66),1205px 576px 0 0.5px rgba(255,255,255,0.61),219px 680px 0 0px rgba(255,255,255,0.42),966px 676px 0 0px rgba(255,255,255,0.35),1321px 482px 0 0px rgba(255,255,255,0.45),374px 692px 0 0px rgba(255,255,255,0.53),816px 330px 0 1px rgba(255,255,255,0.82),350px 85px 0 0px rgba(255,255,255,0.50),976px 381px 0 0.5px rgba(255,255,255,0.54),442px 582px 0 1px rgba(255,255,255,0.91),997px 695px 0 0px rgba(255,255,255,0.58),1069px 320px 0 0px rgba(255,255,255,0.52),504px 185px 0 0.5px rgba(255,255,255,0.69),751px 604px 0 0.5px rgba(255,255,255,0.55),488px 81px 0 0px rgba(255,255,255,0.40),1227px 602px 0 0px rgba(255,255,255,0.36),826px 261px 0 0.5px rgba(255,255,255,0.78),1207px 155px 0 0px rgba(255,255,255,0.50),721px 802px 0 0.5px rgba(255,255,255,0.79),1014px 633px 0 0px rgba(255,255,255,0.31),97px 547px 0 0.5px rgba(255,255,255,0.60),307px 218px 0 0px rgba(255,255,255,0.47),1404px 719px 0 0px rgba(255,255,255,0.48),104px 750px 0 0px rgba(255,255,255,0.20),906px 144px 0 0px rgba(255,255,255,0.22),642px 505px 0 0.5px rgba(255,255,255,0.51),1191px 120px 0 0px rgba(255,255,255,0.45),490px 311px 0 0px rgba(255,255,255,0.29),1143px 205px 0 0.5px rgba(255,255,255,0.78),773px 50px 0 0.5px rgba(255,255,255,0.51),727px 391px 0 0px rgba(255,255,255,0.45),1043px 531px 0 0px rgba(255,255,255,0.40),848px 220px 0 0.5px rgba(255,255,255,0.85),1420px 86px 0 0px rgba(255,255,255,0.25),654px 615px 0 0.5px rgba(255,255,255,0.66),492px 188px 0 0px rgba(255,255,255,0.31),280px 661px 0 0px rgba(255,255,255,0.38),285px 633px 0 0px rgba(255,255,255,0.31),807px 631px 0 1px rgba(255,255,255,0.94),1366px 821px 0 0.5px rgba(255,255,255,0.52),296px 35px 0 0.5px rgba(255,255,255,0.75),907px 252px 0 0px rgba(255,255,255,0.27),64px 176px 0 0px rgba(255,255,255,0.56),1158px 418px 0 0px rgba(255,255,255,0.24),222px 697px 0 0px rgba(255,255,255,0.60),1313px 712px 0 0px rgba(255,255,255,0.53),185px 118px 0 0px rgba(255,255,255,0.40),301px 242px 0 0px rgba(255,255,255,0.56),1023px 843px 0 0px rgba(255,255,255,0.49),553px 727px 0 0.5px rgba(255,255,255,0.55),19px 209px 0 0px rgba(255,255,255,0.35),13px 743px 0 0.5px rgba(255,255,255,0.66),62px 794px 0 0px rgba(255,255,255,0.33),921px 202px 0 0px rgba(255,255,255,0.56),551px 114px 0 0px rgba(255,255,255,0.25),288px 419px 0 0px rgba(255,255,255,0.45),1018px 405px 0 0px rgba(255,255,255,0.49),77px 432px 0 0px rgba(255,255,255,0.47),1028px 232px 0 0px rgba(255,255,255,0.48),679px 147px 0 0.5px rgba(255,255,255,0.71),90px 231px 0 1px rgba(255,255,255,0.81),565px 706px 0 0.5px rgba(255,255,255,0.72),1068px 57px 0 0px rgba(255,255,255,0.59),1156px 57px 0 0px rgba(255,255,255,0.30),1340px 214px 0 0px rgba(255,255,255,0.57),221px 40px 0 0.5px rgba(255,255,255,0.54),1401px 639px 0 0px rgba(255,255,255,0.52),234px 468px 0 0px rgba(255,255,255,0.51),1226px 505px 0 0.5px rgba(255,255,255,0.68),893px 539px 0 0.5px rgba(255,255,255,0.53),78px 496px 0 0px rgba(255,255,255,0.36),11px 669px 0 0px rgba(255,255,255,0.53),1169px 421px 0 0px rgba(255,255,255,0.46),298px 396px 0 0px rgba(255,255,255,0.59),786px 329px 0 0px rgba(255,255,255,0.49),1224px 759px 0 0px rgba(255,255,255,0.35),436px 684px 0 0px rgba(255,255,255,0.44),1409px 690px 0 0px rgba(255,255,255,0.23),164px 624px 0 0px rgba(255,255,255,0.41),656px 377px 0 0px rgba(255,255,255,0.46),1320px 659px 0 0.5px rgba(255,255,255,0.82),1206px 645px 0 0px rgba(255,255,255,0.47),1224px 397px 0 0.5px rgba(255,255,255,0.56),1358px 407px 0 0.5px rgba(255,255,255,0.59),433px 326px 0 0px rgba(255,255,255,0.24),638px 873px 0 1px rgba(255,255,255,0.94),1205px 885px 0 0px rgba(255,255,255,0.30),594px 42px 0 0px rgba(255,255,255,0.55),1326px 309px 0 0.5px rgba(255,255,255,0.77),1281px 712px 0 0px rgba(255,255,255,0.24),1189px 296px 0 0px rgba(255,255,255,0.35),765px 587px 0 0px rgba(255,255,255,0.58),587px 815px 0 1px rgba(255,255,255,0.77),306px 273px 0 0.5px rgba(255,255,255,0.50),375px 644px 0 1px rgba(255,255,255,0.79),631px 619px 0 0px rgba(255,255,255,0.50),1085px 239px 0 0px rgba(255,255,255,0.21),995px 205px 0 0px rgba(255,255,255,0.59),926px 536px 0 0px rgba(255,255,255,0.44),1001px 287px 0 0px rgba(255,255,255,0.23),21px 337px 0 0px rgba(255,255,255,0.25),711px 864px 0 0px rgba(255,255,255,0.51),256px 111px 0 0px rgba(255,255,255,0.36),993px 409px 0 0.5px rgba(255,255,255,0.53),1343px 320px 0 0.5px rgba(255,255,255,0.51),1193px 220px 0 0.5px rgba(255,255,255,0.78),966px 264px 0 0px rgba(255,255,255,0.28),1303px 161px 0 0px rgba(255,255,255,0.43),952px 180px 0 0px rgba(255,255,255,0.24),1415px 356px 0 0px rgba(255,255,255,0.43),321px 80px 0 0px rgba(255,255,255,0.54),1041px 144px 0 0.5px rgba(255,255,255,0.59),527px 477px 0 0px rgba(255,255,255,0.30),1146px 271px 0 0px rgba(255,255,255,0.51),323px 192px 0 0px rgba(255,255,255,0.35),526px 579px 0 0px rgba(255,255,255,0.55),73px 599px 0 0.5px rgba(255,255,255,0.58),42px 404px 0 0px rgba(255,255,255,0.38),1025px 105px 0 0px rgba(255,255,255,0.39),250px 224px 0 0px rgba(255,255,255,0.25),98px 337px 0 0px rgba(255,255,255,0.57),799px 86px 0 0px rgba(255,255,255,0.50),811px 778px 0 0.5px rgba(255,255,255,0.54),1359px 479px 0 0px rgba(255,255,255,0.27),1245px 208px 0 0px rgba(255,255,255,0.31),1331px 423px 0 0.5px rgba(255,255,255,0.53),652px 299px 0 0px rgba(255,255,255,0.47),520px 128px 0 1px rgba(255,255,255,0.87),259px 33px 0 0px rgba(255,255,255,0.41),35px 431px 0 0.5px rgba(255,255,255,0.69),337px 456px 0 0px rgba(255,255,255,0.46),209px 720px 0 1px rgba(255,255,255,0.94),1235px 342px 0 0.5px rgba(255,255,255,0.56),327px 542px 0 0.5px rgba(255,255,255,0.53),312px 55px 0 0px rgba(255,255,255,0.26),276px 673px 0 0px rgba(255,255,255,0.58),579px 612px 0 0px rgba(255,255,255,0.58),336px 437px 0 0px rgba(255,255,255,0.58),709px 883px 0 0px rgba(255,255,255,0.53),586px 321px 0 0px rgba(255,255,255,0.21),538px 164px 0 0.5px rgba(255,255,255,0.50),875px 247px 0 0px rgba(255,255,255,0.42),1025px 143px 0 0px rgba(255,255,255,0.25),1383px 153px 0 0px rgba(255,255,255,0.41),337px 169px 0 0px rgba(255,255,255,0.38),589px 793px 0 0.5px rgba(255,255,255,0.83),25px 275px 0 0px rgba(255,255,255,0.59),1253px 388px 0 0px rgba(255,255,255,0.54),1162px 590px 0 0px rgba(255,255,255,0.25),351px 594px 0 0px rgba(255,255,255,0.52),109px 801px 0 0px rgba(255,255,255,0.48),368px 229px 0 0px rgba(255,255,255,0.41),975px 88px 0 0.5px rgba(255,255,255,0.72),679px 606px 0 0.5px rgba(255,255,255,0.50),684px 611px 0 0.5px rgba(255,255,255,0.73),260px 854px 0 0px rgba(255,255,255,0.37),1379px 203px 0 0px rgba(255,255,255,0.58),1296px 225px 0 0.5px rgba(255,255,255,0.63),955px 688px 0 0px rgba(255,255,255,0.29),310px 254px 0 0px rgba(255,255,255,0.25),585px 388px 0 0px rgba(255,255,255,0.43),1357px 524px 0 0px rgba(255,255,255,0.48),630px 176px 0 0px rgba(255,255,255,0.21),973px 163px 0 0px rgba(255,255,255,0.58),1104px 748px 0 0px rgba(255,255,255,0.45),1103px 285px 0 0px rgba(255,255,255,0.53),866px 760px 0 0.5px rgba(255,255,255,0.71),286px 37px 0 0px rgba(255,255,255,0.49),392px 85px 0 0px rgba(255,255,255,0.27),1002px 27px 0 0px rgba(255,255,255,0.31),164px 833px 0 0px rgba(255,255,255,0.33),752px 301px 0 0px rgba(255,255,255,0.39),372px 72px 0 0px rgba(255,255,255,0.26),132px 564px 0 0px rgba(255,255,255,0.31),1140px 655px 0 0px rgba(255,255,255,0.40),271px 828px 0 0px rgba(255,255,255,0.26),997px 358px 0 0.5px rgba(255,255,255,0.58),1148px 719px 0 0px rgba(255,255,255,0.43),275px 637px 0 0.5px rgba(255,255,255,0.78),333px 105px 0 0px rgba(255,255,255,0.43),199px 191px 0 0px rgba(255,255,255,0.24),913px 233px 0 0px rgba(255,255,255,0.37),768px 651px 0 0px rgba(255,255,255,0.49),318px 276px 0 0px rgba(255,255,255,0.48),448px 598px 0 0px rgba(255,255,255,0.26),326px 692px 0 0.5px rgba(255,255,255,0.75),1381px 712px 0 0px rgba(255,255,255,0.33),1039px 72px 0 0px rgba(255,255,255,0.24)"></i><i style="position:absolute;left:0;top:0;width:1.5px;height:1.5px;border-radius:50%;box-shadow:27px 460px 0.5px 0.90px rgba(255,255,255,.9),213px 429px 0.5px 0.78px rgba(255,255,255,.9),328px 410px 0.5px 0.78px rgba(255,255,255,.9),415px 426px 0.5px 0.72px rgba(255,255,255,.9),428px 432px 0.5px 0.48px rgba(255,255,255,.9),389px 448px 0.5px 0.48px rgba(255,255,255,.9),391px 476px 0.5px 0.48px rgba(255,255,255,.9),173px 545px 0.5px 0.60px rgba(255,255,255,.9),118px 593px 0.5px 0.60px rgba(255,255,255,.9),50px 487px 0.5px 0.48px rgba(255,255,255,.9),300px 573px 0.5px 0.48px rgba(255,255,255,.9),1310px 183px 0.5px 0.90px rgba(255,255,255,.9),1414px 147px 0.5px 0.60px rgba(255,255,255,.9),1268px 166px 0.5px 0.48px rgba(255,255,255,.9),1306px 300px 0.5px 0.72px rgba(255,255,255,.9),1363px 288px 0.5px 0.60px rgba(255,255,255,.9),1254px 299px 0.5px 0.48px rgba(255,255,255,.9),126px 643px 0.5px 0.60px rgba(255,255,255,.9),206px 656px 0.5px 0.60px rgba(255,255,255,.9),503px 712px 0.5px 0.48px rgba(255,255,255,.9),512px 777px 0.5px 0.48px rgba(255,255,255,.9),512px 784px 0.5px 0.48px rgba(255,255,255,.9),507px 845px 0.5px 0.48px rgba(255,255,255,.9),1409px 402px 0.5px 0.60px rgba(255,255,255,.9),1386px 556px 0.5px 0.48px rgba(255,255,255,.9),1400px 818px 0.5px 0.48px rgba(255,255,255,.9)"></i><div id="menubar"><svg class="a" style="left:20px;top:2px" width="15" height="17" viewBox="0 0 24 24"><path fill="#3a3a3a" d="M12.152 6.896c-.948 0-2.415-1.078-3.96-1.04-2.04.027-3.91 1.183-4.961 3.014-2.117 3.675-.546 9.103 1.519 12.09 1.013 1.454 2.208 3.09 3.792 3.039 1.52-.065 2.09-.987 3.935-.987 1.831 0 2.35.987 3.96.948 1.637-.026 2.676-1.48 3.676-2.948 1.156-1.688 1.636-3.325 1.662-3.415-.039-.013-3.182-1.221-3.22-4.857-.026-3.04 2.48-4.494 2.597-4.559-1.429-2.09-3.623-2.324-4.39-2.376-2-.156-3.675 1.09-4.61 1.09zM15.53 3.83c.843-1.012 1.4-2.427 1.245-3.83-1.207.052-2.662.805-3.532 1.818-.78.896-1.454 2.338-1.273 3.714 1.338.104 2.715-.688 3.559-1.701"/></svg><div class="mi" style="left:54.5px;font-weight:bold;color:#2b2b2b">Finder</div><div class="mi" style="left:117px">File</div><div class="mi" style="left:158px">Edit</div><div class="mi" style="left:202px">View</div><div class="mi" style="left:251px">Go</div><div class="mi" style="left:289px">Window</div><div class="mi" style="left:360px">Help</div><svg class="a" style="left:1070px;top:4px" width="18" height="15" viewBox="0 0 18 15"><path d="M1.5 3.5 Q1 9 7 13.5 L9 12 L7 9.5 L5.5 10 Q3.8 8 3.8 6 L5.2 5 L4 2 Z" fill="#333"/><circle cx="10" cy="6" r="0.9" fill="#bbb"/><circle cx="12" cy="4" r="0.9" fill="#bbb"/><circle cx="14" cy="2" r="0.9" fill="#bbb"/><circle cx="12" cy="7" r="0.9" fill="#ccc"/></svg><svg class="a" style="left:1103px;top:3px" width="11" height="16" viewBox="0 0 11 16"><path d="M2 4.5 L8.5 11 L5.5 14 V2 L8.5 5 L2 11.5" fill="none" stroke="#c4c4c4" stroke-width="1.1"/></svg><svg class="a" style="left:1127px;top:4px" width="23" height="15" viewBox="0 0 23 15"><path d="M1 4.5 Q11.5 -3 22 4.5 L11.5 14 Z" fill="none" stroke="#333" stroke-width="1.2" stroke-linejoin="round"/></svg><svg class="a" style="left:1158px;top:5px" width="10" height="13" viewBox="0 0 10 13"><path d="M0 4 H3 L9 0 V13 L3 9 H0 Z" fill="#333"/></svg><div class="mi" style="left:1190px;font-size:13px;top:4px;color:#3a3a3a">100%</div><svg class="a" style="left:1228px;top:5px" width="24" height="12" viewBox="0 0 24 12"><rect x="0.75" y="0.75" width="19.5" height="10.5" rx="1.5" fill="none" stroke="#333" stroke-width="1.5"/><rect x="21" y="3.5" width="2" height="5" fill="#333"/><path d="M3 3 H9 L7.5 6 H11 L6 10.5 L7.5 7 H3 Z M12 3 H18 V9 H10 L13 6.5 H10.5 Z" fill="#333"/></svg><svg class="a" style="left:1266px;top:5px" width="17" height="11" viewBox="0 0 17 11"><rect width="17" height="11" fill="#fff"/><g fill="#c22"><rect x="0" y="0.00" width="17" height="0.8"/><rect x="0" y="1.57" width="17" height="0.8"/><rect x="0" y="3.14" width="17" height="0.8"/><rect x="0" y="4.71" width="17" height="0.8"/><rect x="0" y="6.28" width="17" height="0.8"/><rect x="0" y="7.85" width="17" height="0.8"/><rect x="0" y="9.42" width="17" height="0.8"/></g><rect width="7.5" height="6" fill="#2a3a8a"/><g fill="#fff"><circle cx="1.0" cy="1.0" r="0.35"/><circle cx="2.8" cy="1.0" r="0.35"/><circle cx="4.6" cy="1.0" r="0.35"/><circle cx="6.4" cy="1.0" r="0.35"/><circle cx="1.0" cy="2.4" r="0.35"/><circle cx="2.8" cy="2.4" r="0.35"/><circle cx="4.6" cy="2.4" r="0.35"/><circle cx="6.4" cy="2.4" r="0.35"/><circle cx="1.0" cy="3.8" r="0.35"/><circle cx="2.8" cy="3.8" r="0.35"/><circle cx="4.6" cy="3.8" r="0.35"/><circle cx="6.4" cy="3.8" r="0.35"/><circle cx="1.0" cy="5.2" r="0.35"/><circle cx="2.8" cy="5.2" r="0.35"/><circle cx="4.6" cy="5.2" r="0.35"/><circle cx="6.4" cy="5.2" r="0.35"/></g></svg><div class="mi" style="left:1295px;font-size:14.3px">14:20:25</div><svg class="a" style="left:1369px;top:4px" width="16" height="16" viewBox="0 0 16 16"><circle cx="6.5" cy="6.5" r="5" fill="none" stroke="#333" stroke-width="1.5"/><path d="M10 10 L14.5 14.5" stroke="#333" stroke-width="1.7"/></svg><svg class="a" style="left:1399px;top:5px" width="18" height="12" viewBox="0 0 18 12"><g fill="#333"><rect x="0" y="0.5" width="2" height="1.5"/><rect x="0" y="5" width="2" height="1.5"/><rect x="0" y="9.5" width="2" height="1.5"/><rect x="4" y="0.5" width="14" height="1.5"/><rect x="4" y="5" width="14" height="1.5"/><rect x="4" y="9.5" width="14" height="1.5"/></g></svg></div><div class="a" style="left:1388px;top:27px;width:36px;height:36px;border:2px solid #5f6166;border-radius:2px;background:rgba(0,0,0,.45)"></div><svg class="a" style="left:1391px;top:29px" width="30" height="30" viewBox="0 0 30 30"><defs><linearGradient id="hd" x1="0" y1="0" x2="0" y2="1"><stop offset="0" stop-color="#e8ecec"/><stop offset="0.7" stop-color="#b9c0c0"/><stop offset="1" stop-color="#8e9595"/></linearGradient></defs><path d="M5 1.5 H25 Q26.5 1.5 26.6 3 L28 22 H2 L3.4 3 Q3.5 1.5 5 1.5 Z" fill="url(#hd)"/><rect x="2" y="22" width="26" height="6" fill="#8a9090"/><rect x="9" y="3.5" width="12" height="2" fill="#333"/><ellipse cx="15.5" cy="14" rx="4" ry="3.2" fill="#c9d0d0"/><g fill="#222"><rect x="12.0" y="23" width="0.9" height="4"/><rect x="13.7" y="23" width="0.9" height="4"/><rect x="15.4" y="23" width="0.9" height="4"/><rect x="17.1" y="23" width="0.9" height="4"/><rect x="18.8" y="23" width="0.9" height="4"/><rect x="20.5" y="23" width="0.9" height="4"/><rect x="22.2" y="23" width="0.9" height="4"/></g></svg><div class="a" style="left:1392px;top:65px;width:27px;height:16px;border-radius:4px;background:#d4d4d4"></div><div class="dl" style="left:1392px;top:67px;width:27px;color:#808080;text-shadow:none">Air3</div><div class="a" style="left:1390px;top:93px;width:28px;height:24px;background:#2c2c2c;border:1px solid #c8c8c8;border-radius:1px"></div><div class="a" style="left:1394px;top:98px;width:10px;height:2px;background:#3fd24a"></div><div class="a" style="left:1394px;top:101px;width:10px;height:1px;background:#a33"></div><svg class="a" style="left:1388px;top:114px" width="6" height="6" viewBox="0 0 6 6"><rect x="0.5" y="0.5" width="5" height="5" fill="#fff" stroke="#444" stroke-width="0.7"/><path d="M1.5 4.5 L4 2 M2.5 2 H4 V3.5" stroke="#333" stroke-width="0.7" fill="none"/></svg><div class="dl" style="left:1364px;top:126px;width:80px">CPUtemp</div><svg class="a" style="left:1388px;top:156px" width="31" height="25" viewBox="0 0 31 25"><path d="M0.5 2 Q0.5 0.5 2 0.5 H11 L13 3 H29 Q30.5 3 30.5 4.5 V23 Q30.5 24.5 29 24.5 H2 Q0.5 24.5 0.5 23 Z" fill="#5fc4f3"/><path d="M0.5 5.5 H30.5" stroke="#8ad6f9" stroke-width="1"/></svg><div class="dl" style="left:1364px;top:190px;width:80px">work</div><svg class="a" style="left:1389px;top:215px" width="31" height="25" viewBox="0 0 31 25"><path d="M0.5 2 Q0.5 0.5 2 0.5 H11 L13 3 H29 Q30.5 3 30.5 4.5 V23 Q30.5 24.5 29 24.5 H2 Q0.5 24.5 0.5 23 Z" fill="#5fc4f3"/><path d="M0.5 5.5 H30.5" stroke="#8ad6f9" stroke-width="1"/></svg><div class="dl" style="left:1364px;top:249px;width:80px">Unity&#21193;&#24378;</div><div class="dl" style="left:1364px;top:262px;width:80px">&#20250;</div><svg class="a" style="left:1391px;top:285px" width="29" height="30" viewBox="0 0 29 30"><rect x="1" y="0.5" width="27" height="20" rx="2" fill="#5d7fb5" stroke="#c9d2dc" stroke-width="1"/><rect x="3" y="3" width="23" height="15" fill="#3d5f95"/><g fill="#e8eef6"><circle cx="8.0" cy="6" r="1.6"/><rect x="6.3" y="8" width="3.4" height="7"/><circle cx="14.5" cy="6" r="1.6"/><rect x="12.8" y="8" width="3.4" height="7"/><circle cx="21.0" cy="6" r="1.6"/><rect x="19.3" y="8" width="3.4" height="7"/></g><path d="M1 20 H28 L28 27 Q28 29 26 29 H3 Q1 29 1 27 Z" fill="#cfd3d6"/><rect x="21" y="23.5" width="3" height="1.2" fill="#4fc14f"/></svg><div class="dl" style="left:1364px;top:322px;width:80px">Desktop</div><div class="win" style="left:31px;top:31px;width:1208px;height:357px;background:#f6f6f6;border-radius:5px 5px 4px 4px;box-shadow:0 0 0 1px rgba(0,0,0,.25), 0 10px 28px rgba(0,0,0,.5)"><div class="a" style="left:8px;top:5px;width:12px;height:12px;border-radius:50%;background:#dedede;border:1px solid #d2d2d2"></div><div class="a" style="left:28px;top:5px;width:12px;height:12px;border-radius:50%;background:#dedede;border:1px solid #d2d2d2"></div><div class="a" style="left:48px;top:5px;width:12px;height:12px;border-radius:50%;background:#dedede;border:1px solid #d2d2d2"></div><svg class="a" style="left:557px;top:4px" width="16" height="14" viewBox="0 0 16 14"><path d="M0.5 1.2 Q0.5 0.5 1.2 0.5 H6 L7 2 H15 Q15.5 2 15.5 2.5 V13.3 Q15.5 13.5 15.3 13.5 H0.7 Q0.5 13.5 0.5 13.3 Z" fill="#55c2f5" stroke="#3eaae4" stroke-width="1"/><path d="M1 3 H15" stroke="#a9e0f9" stroke-width="1"/></svg><div class="t" style="left:577px;top:3px;color:#a8a8a8">08-Shaders</div><div class="tb" style="left:8px;top:24px;width:26px;height:22px;border:1px solid #dcdcdc;background:#f6f6f6;"></div><div class="tb" style="left:34px;top:24px;width:26px;height:22px;border:1px solid #dcdcdc;background:#f6f6f6;"></div><svg class="a" style="left:16px;top:29px" width="10" height="12" viewBox="0 0 10 12"><path d="M7 1 L2 6 L7 11" fill="none" stroke="#b0b0b0" stroke-width="1.4"/></svg><svg class="a" style="left:43px;top:29px" width="10" height="12" viewBox="0 0 10 12"><path d="M3 1 L8 6 L3 11" fill="none" stroke="#b0b0b0" stroke-width="1.4"/></svg><div class="tb" style="left:143px;top:24px;width:111px;height:22px;border:1px solid #dcdcdc;background:#f6f6f6"></div><div class="a" style="left:199px;top:25px;width:28px;height:20px;background:#e3e3e3"></div><div class="a" style="left:172px;top:25px;width:1px;height:20px;background:#dedede"></div><div class="a" style="left:199px;top:25px;width:1px;height:20px;background:#dedede"></div><div class="a" style="left:226px;top:25px;width:1px;height:20px;background:#dedede"></div><svg class="a" style="left:152px;top:29px" width="12" height="12" viewBox="0 0 12 12"><g fill="none" stroke="#a9a9a9" stroke-width="1.1"><rect x="1.5" y="1.5" width="3" height="3" rx="0.4"/><rect x="7.5" y="1.5" width="3" height="3" rx="0.4"/><rect x="1.5" y="7.5" width="3" height="3" rx="0.4"/><rect x="7.5" y="7.5" width="3" height="3" rx="0.4"/></g></svg><svg class="a" style="left:179px;top:29px" width="16" height="12" viewBox="0 0 16 12"><g fill="#a9a9a9"><rect x="0" y="1" width="14" height="1.1"/><rect x="0" y="4.1" width="14" height="1.1"/><rect x="0" y="7.2" width="14" height="1.1"/><rect x="0" y="10.3" width="14" height="1.1"/></g></svg><svg class="a" style="left:205px;top:29px" width="17" height="12" viewBox="0 0 17 12"><g fill="none" stroke="#a9a9a9" stroke-width="1.1"><rect x="0.55" y="1.05" width="15" height="9.6"/><path d="M5.5 1 V10.6 M10.5 1 V10.6"/></g></svg><svg class="a" style="left:231px;top:29px" width="19" height="12" viewBox="0 0 19 12"><g fill="none" stroke="#a9a9a9" stroke-width="1"><path d="M0.5 0.5 V10.5 M2.5 0.5 V10.5 M16.5 0.5 V10.5 M18.5 0.5 V10.5"/><rect x="5.5" y="1" width="7.5" height="7.5"/></g></svg><div class="tb" style="left:264px;top:24px;width:38px;height:22px;border:1px solid #dcdcdc;background:#f6f6f6;"></div><div class="tb" style="left:312px;top:24px;width:38px;height:22px;border:1px solid #dcdcdc;background:#f6f6f6;"></div><div class="tb" style="left:360px;top:24px;width:38px;height:22px;border:1px solid #dcdcdc;background:#f6f6f6;"></div><div class="tb" style="left:408px;top:24px;width:38px;height:22px;border:1px solid #dcdcdc;background:#f6f6f6;"></div><svg class="a" style="left:270px;top:28px" width="30" height="14" viewBox="0 0 30 14"><g fill="none" stroke="#a9a9a9" stroke-width="1"><path d="M0 0.5 H14 M0 7.5 H14"/><rect x="0.5" y="2.5" width="3" height="3"/><rect x="5.5" y="2.5" width="3" height="3"/><rect x="10.5" y="2.5" width="3" height="3"/><rect x="0.5" y="9.5" width="3" height="3"/><rect x="5.5" y="9.5" width="3" height="3"/><rect x="10.5" y="9.5" width="3" height="3"/><path d="M22 5 L25 8 L28 5" stroke-width="1.3"/></g></svg><svg class="a" style="left:318px;top:28px" width="30" height="14" viewBox="0 0 30 14"><rect x="6" y="0" width="2.4" height="14" fill="#a9a9a9" transform="rotate(0 7.2 7)"/><rect x="6" y="0" width="2.4" height="14" fill="#a9a9a9" transform="rotate(45 7.2 7)"/><rect x="6" y="0" width="2.4" height="14" fill="#a9a9a9" transform="rotate(90 7.2 7)"/><rect x="6" y="0" width="2.4" height="14" fill="#a9a9a9" transform="rotate(135 7.2 7)"/><circle cx="7.2" cy="7" r="5" fill="#a9a9a9"/><circle cx="7.2" cy="7" r="2" fill="#f6f6f6"/><path d="M22 5 L25 8 L28 5" fill="none" stroke="#a9a9a9" stroke-width="1.3"/></svg><svg class="a" style="left:373px;top:27px" width="12" height="16" viewBox="0 0 12 16"><path d="M4 6 H1 V15 H11 V6 H8 M6 11 V1 M3 4 L6 1 L9 4" fill="none" stroke="#a9a9a9" stroke-width="1.1"/></svg><svg class="a" style="left:418px;top:29px" width="18" height="12" viewBox="0 0 18 12"><path d="M5 1 H16.5 V11 H5 L0.8 6 Z" fill="none" stroke="#a9a9a9" stroke-width="1.1"/><circle cx="4.5" cy="6" r="0.9" fill="#a9a9a9"/></svg><div class="tb" style="left:875px;top:24px;width:325px;height:22px;border:1px solid #dcdcdc;background:#f4f4f4"></div><svg class="a" style="left:999px;top:29px" width="12" height="12" viewBox="0 0 12 12"><circle cx="5" cy="5" r="3.8" fill="none" stroke="#c4c4c4" stroke-width="1.1"/><path d="M7.8 7.8 L11 11" stroke="#c4c4c4" stroke-width="1.2"/></svg><div class="t" style="left:1016px;top:27px;color:#c6c6c6">Search</div><div class="a" style="left:0;top:54px;width:1208px;height:1px;background:#c4c4c4"></div><div class="a" style="left:0;top:55px;width:138px;height:278px;background:#f6f6f6"></div><div class="a" style="left:138px;top:55px;width:1px;height:278px;background:#c8c8c8"></div><div class="sh" style="left:9px;top:63px">Favorites</div><div class="sh" style="left:9px;top:91px">Devices</div><div class="sh" style="left:9px;top:145px">Shared</div><svg class="a" style="left:18px;top:112px" width="18" height="18" viewBox="0 0 18 18"><circle cx="9" cy="9" r="8.3" fill="#d9d9d9" stroke="#9a9a9a" stroke-width="1"/><circle cx="9" cy="9" r="5.5" fill="none" stroke="#b5b5b5" stroke-width="0.8"/><circle cx="9" cy="9" r="2.6" fill="#f2f2f2" stroke="#999" stroke-width="1"/></svg><div class="si" style="left:41px;top:113px">Remote Disc</div><svg class="a" style="left:18px;top:167px" width="19" height="16" viewBox="0 0 19 16"><rect x="0.6" y="0.6" width="17.8" height="11.5" rx="1" fill="#e3e3e3" stroke="#8c8c8c" stroke-width="1.1"/><rect x="7" y="12.5" width="5" height="2" fill="#9a9a9a"/><rect x="5" y="14.3" width="9" height="1.2" fill="#9a9a9a"/></svg><div class="si" style="left:42px;top:167px">nagasm_...</div><svg class="a" style="left:122px;top:170px" width="10" height="10" viewBox="0 0 10 10"><path d="M5 0.5 L9.5 6 H0.5 Z" fill="#777"/><rect x="0.5" y="7.5" width="9" height="2" fill="#777"/></svg><svg class="a" style="left:18px;top:192px" width="18" height="18" viewBox="0 0 18 18"><circle cx="9" cy="9" r="8.4" fill="#9c9c9c" stroke="#8a8a8a" stroke-width="0.8"/><path d="M3 6 Q6 3 9 5 Q12 8 15 6 M2.5 11 Q6 9 9 12 Q12 14 15.5 11 M6 2 Q9 9 6 16 M12 2 Q10 9 12 16" fill="none" stroke="#e2e2e2" stroke-width="0.8"/></svg><div class="si" style="left:42px;top:194px">All...</div><div class="a" style="left:0;top:333px;width:1208px;height:1px;background:#c8c8c8"></div><div class="a" style="left:139px;top:55px;width:1069px;height:263px;background:#fff"></div><div class="a" style="left:139px;top:318px;width:1069px;height:15px;background:#f9f9f9;border-top:1px solid #ececec"></div><div class="a" style="left:139px;top:56px;width:3px;height:17px;background:#dcdcdc"></div><div class="a" style="left:142px;top:55px;width:15px;height:263px;background:#f7f7f7;border-left:1px solid #ededed;border-right:1px solid #ededed"></div><div class="a" style="left:147px;top:306px;width:1px;height:8px;background:#a8a8a8"></div><div class="a" style="left:151px;top:306px;width:1px;height:8px;background:#a8a8a8"></div><div class="a" style="left:347px;top:55px;width:15px;height:263px;background:#f7f7f7;border-left:1px solid #ededed;border-right:1px solid #ededed"></div><div class="a" style="left:352px;top:306px;width:1px;height:8px;background:#a8a8a8"></div><div class="a" style="left:356px;top:306px;width:1px;height:8px;background:#a8a8a8"></div><div class="a" style="left:552px;top:55px;width:15px;height:263px;background:#f7f7f7;border-left:1px solid #ededed;border-right:1px solid #ededed"></div><div class="a" style="left:557px;top:306px;width:1px;height:8px;background:#a8a8a8"></div><div class="a" style="left:561px;top:306px;width:1px;height:8px;background:#a8a8a8"></div><div class="a" style="left:757px;top:55px;width:15px;height:263px;background:#f7f7f7;border-left:1px solid #ededed;border-right:1px solid #ededed"></div><div class="a" style="left:762px;top:306px;width:1px;height:8px;background:#a8a8a8"></div><div class="a" style="left:766px;top:306px;width:1px;height:8px;background:#a8a8a8"></div><div class="a" style="left:962px;top:55px;width:15px;height:263px;background:#f7f7f7;border-left:1px solid #ededed;border-right:1px solid #ededed"></div><div class="a" style="left:967px;top:306px;width:1px;height:8px;background:#a8a8a8"></div><div class="a" style="left:971px;top:306px;width:1px;height:8px;background:#a8a8a8"></div><div class="a" style="left:1193px;top:55px;width:15px;height:263px;background:#f7f7f7;border-left:1px solid #ededed;border-right:1px solid #ededed"></div><div class="a" style="left:1198px;top:306px;width:1px;height:8px;background:#a8a8a8"></div><div class="a" style="left:1202px;top:306px;width:1px;height:8px;background:#a8a8a8"></div><svg class="a" style="left:163px;top:57px" width="16" height="14" viewBox="0 0 16 14"><path d="M0.5 1.2 Q0.5 0.5 1.2 0.5 H6 L7 2 H15 Q15.5 2 15.5 2.5 V13.3 Q15.5 13.5 15.3 13.5 H0.7 Q0.5 13.5 0.5 13.3 Z" fill="#55c2f5" stroke="#3eaae4" stroke-width="1"/><path d="M1 3 H15" stroke="#7bd3fb" stroke-width="1"/><path d="M5 11.5 L8 5.5 L11 11.5 M6.2 9.3 H9.8 M3.8 10.2 H12.2" stroke="#1b7fc4" stroke-width="0.9" fill="none"/></svg><div class="t" style="left:185px;top:57px">Applications</div><svg class="a" style="left:339px;top:59.5px" width="6" height="8" viewBox="0 0 6 8"><path d="M0 0 L5.5 4 L0 8 Z" fill="#8a8a8a"/></svg><svg class="a" style="left:163px;top:75px" width="16" height="14" viewBox="0 0 16 14"><path d="M0.5 1.2 Q0.5 0.5 1.2 0.5 H6 L7 2 H15 Q15.5 2 15.5 2.5 V13.3 Q15.5 13.5 15.3 13.5 H0.7 Q0.5 13.5 0.5 13.3 Z" fill="#55c2f5" stroke="#3eaae4" stroke-width="1"/><path d="M1 3 H15" stroke="#7bd3fb" stroke-width="1"/><rect x="3.5" y="5.5" width="9" height="6" fill="none" stroke="#1b7fc4" stroke-width="1"/><path d="M3.5 7 H12.5" stroke="#1b7fc4" stroke-width="1"/></svg><div class="t" style="left:185px;top:75px">Desktop</div><svg class="a" style="left:339px;top:77.5px" width="6" height="8" viewBox="0 0 6 8"><path d="M0 0 L5.5 4 L0 8 Z" fill="#8a8a8a"/></svg><div class="a" style="left:157px;top:92px;width:190px;height:17px;background:#dcdcdc"></div><svg class="a" style="left:163px;top:93px" width="16" height="14" viewBox="0 0 16 14"><path d="M0.5 1.2 Q0.5 0.5 1.2 0.5 H6 L7 2 H15 Q15.5 2 15.5 2.5 V13.3 Q15.5 13.5 15.3 13.5 H0.7 Q0.5 13.5 0.5 13.3 Z" fill="#55c2f5" stroke="#3eaae4" stroke-width="1"/><path d="M1 3 H15" stroke="#7bd3fb" stroke-width="1"/><path d="M6 5.5 H9 L10.5 7 V12 H6 Z" fill="none" stroke="#1b7fc4" stroke-width="1"/></svg><div class="t" style="left:185px;top:93px">Documents</div><svg class="a" style="left:339px;top:95.5px" width="6" height="8" viewBox="0 0 6 8"><path d="M0 0 L5.5 4 L0 8 Z" fill="#8a8a8a"/></svg><svg class="a" style="left:163px;top:111px" width="16" height="14" viewBox="0 0 16 14"><path d="M0.5 1.2 Q0.5 0.5 1.2 0.5 H6 L7 2 H15 Q15.5 2 15.5 2.5 V13.3 Q15.5 13.5 15.3 13.5 H0.7 Q0.5 13.5 0.5 13.3 Z" fill="#55c2f5" stroke="#3eaae4" stroke-width="1"/><path d="M1 3 H15" stroke="#7bd3fb" stroke-width="1"/><circle cx="8" cy="8.7" r="3.3" fill="none" stroke="#1b7fc4" stroke-width="1"/><path d="M8 6.5 V10 M6.6 8.8 L8 10.2 L9.4 8.8" stroke="#1b7fc4" stroke-width="0.9" fill="none"/></svg><div class="t" style="left:185px;top:111px">Downloads</div><svg class="a" style="left:339px;top:113.5px" width="6" height="8" viewBox="0 0 6 8"><path d="M0 0 L5.5 4 L0 8 Z" fill="#8a8a8a"/></svg><svg class="a" style="left:163px;top:129px" width="16" height="14" viewBox="0 0 16 14"><path d="M0.5 1.2 Q0.5 0.5 1.2 0.5 H6 L7 2 H15 Q15.5 2 15.5 2.5 V13.3 Q15.5 13.5 15.3 13.5 H0.7 Q0.5 13.5 0.5 13.3 Z" fill="#55c2f5" stroke="#3eaae4" stroke-width="1"/><path d="M1 3 H15" stroke="#7bd3fb" stroke-width="1"/><rect x="4.5" y="5.5" width="7" height="6" fill="none" stroke="#1b7fc4" stroke-width="1"/><path d="M6.2 5.5 V11.5 M9.8 5.5 V11.5 M4.5 8.5 H11.5" stroke="#1b7fc4" stroke-width="0.8"/></svg><div class="t" style="left:185px;top:129px">Movies</div><svg class="a" style="left:339px;top:131.5px" width="6" height="8" viewBox="0 0 6 8"><path d="M0 0 L5.5 4 L0 8 Z" fill="#8a8a8a"/></svg><svg class="a" style="left:163px;top:147px" width="16" height="14" viewBox="0 0 16 14"><path d="M0.5 1.2 Q0.5 0.5 1.2 0.5 H6 L7 2 H15 Q15.5 2 15.5 2.5 V13.3 Q15.5 13.5 15.3 13.5 H0.7 Q0.5 13.5 0.5 13.3 Z" fill="#55c2f5" stroke="#3eaae4" stroke-width="1"/><path d="M1 3 H15" stroke="#7bd3fb" stroke-width="1"/><path d="M7 11 V6 L10.5 5.5 V10" stroke="#1b7fc4" stroke-width="1" fill="none"/><circle cx="6" cy="11" r="1.2" fill="#1b7fc4"/><circle cx="9.5" cy="10.2" r="1.2" fill="#1b7fc4"/></svg><div class="t" style="left:185px;top:147px">Music</div><svg class="a" style="left:339px;top:149.5px" width="6" height="8" viewBox="0 0 6 8"><path d="M0 0 L5.5 4 L0 8 Z" fill="#8a8a8a"/></svg><svg class="a" style="left:163px;top:165px" width="16" height="14" viewBox="0 0 16 14"><path d="M0.5 1.2 Q0.5 0.5 1.2 0.5 H6 L7 2 H15 Q15.5 2 15.5 2.5 V13.3 Q15.5 13.5 15.3 13.5 H0.7 Q0.5 13.5 0.5 13.3 Z" fill="#55c2f5" stroke="#3eaae4" stroke-width="1"/><path d="M1 3 H15" stroke="#7bd3fb" stroke-width="1"/><rect x="4" y="6.5" width="8" height="5" rx="0.8" fill="none" stroke="#1b7fc4" stroke-width="1"/><circle cx="8" cy="9" r="1.5" fill="none" stroke="#1b7fc4" stroke-width="0.9"/></svg><div class="t" style="left:185px;top:165px">Pictures</div><svg class="a" style="left:339px;top:167.5px" width="6" height="8" viewBox="0 0 6 8"><path d="M0 0 L5.5 4 L0 8 Z" fill="#8a8a8a"/></svg><svg class="a" style="left:163px;top:183px" width="16" height="14" viewBox="0 0 16 14"><path d="M0.5 1.2 Q0.5 0.5 1.2 0.5 H6 L7 2 H15 Q15.5 2 15.5 2.5 V13.3 Q15.5 13.5 15.3 13.5 H0.7 Q0.5 13.5 0.5 13.3 Z" fill="#55c2f5" stroke="#3eaae4" stroke-width="1"/><path d="M1 3 H15" stroke="#7bd3fb" stroke-width="1"/><path d="M8 5.5 L11 8.7 L8 11.9 L5 8.7 Z" fill="none" stroke="#1b7fc4" stroke-width="1"/></svg><div class="t" style="left:185px;top:183px">Public</div><svg class="a" style="left:339px;top:185.5px" width="6" height="8" viewBox="0 0 6 8"><path d="M0 0 L5.5 4 L0 8 Z" fill="#8a8a8a"/></svg><svg class="a" style="left:368px;top:57px" width="16" height="14" viewBox="0 0 16 14"><path d="M0.5 1.2 Q0.5 0.5 1.2 0.5 H6 L7 2 H15 Q15.5 2 15.5 2.5 V13.3 Q15.5 13.5 15.3 13.5 H0.7 Q0.5 13.5 0.5 13.3 Z" fill="#55c2f5" stroke="#3eaae4" stroke-width="1"/><path d="M1 3 H15" stroke="#7bd3fb" stroke-width="1"/></svg><div class="t" style="left:390px;top:57px">Arduino</div><svg class="a" style="left:544px;top:59.5px" width="6" height="8" viewBox="0 0 6 8"><path d="M0 0 L5.5 4 L0 8 Z" fill="#8a8a8a"/></svg><svg class="a" style="left:368px;top:75px" width="16" height="14" viewBox="0 0 16 14"><path d="M0.5 1.2 Q0.5 0.5 1.2 0.5 H6 L7 2 H15 Q15.5 2 15.5 2.5 V13.3 Q15.5 13.5 15.3 13.5 H0.7 Q0.5 13.5 0.5 13.3 Z" fill="#55c2f5" stroke="#3eaae4" stroke-width="1"/><path d="M1 3 H15" stroke="#7bd3fb" stroke-width="1"/></svg><div class="t" style="left:390px;top:75px">Kinect</div><svg class="a" style="left:544px;top:77.5px" width="6" height="8" viewBox="0 0 6 8"><path d="M0 0 L5.5 4 L0 8 Z" fill="#8a8a8a"/></svg><svg class="a" style="left:368px;top:93px" width="16" height="14" viewBox="0 0 16 14"><path d="M0.5 1.2 Q0.5 0.5 1.2 0.5 H6 L7 2 H15 Q15.5 2 15.5 2.5 V13.3 Q15.5 13.5 15.3 13.5 H0.7 Q0.5 13.5 0.5 13.3 Z" fill="#55c2f5" stroke="#3eaae4" stroke-width="1"/><path d="M1 3 H15" stroke="#7bd3fb" stroke-width="1"/></svg><div class="t" style="left:390px;top:93px">leapmotion</div><svg class="a" style="left:544px;top:95.5px" width="6" height="8" viewBox="0 0 6 8"><path d="M0 0 L5.5 4 L0 8 Z" fill="#8a8a8a"/></svg><svg class="a" style="left:368px;top:111px" width="16" height="14" viewBox="0 0 16 14"><path d="M0.5 1.2 Q0.5 0.5 1.2 0.5 H6 L7 2 H15 Q15.5 2 15.5 2.5 V13.3 Q15.5 13.5 15.3 13.5 H0.7 Q0.5 13.5 0.5 13.3 Z" fill="#55c2f5" stroke="#3eaae4" stroke-width="1"/><path d="M1 3 H15" stroke="#7bd3fb" stroke-width="1"/></svg><div class="t" style="left:390px;top:111px">Max</div><svg class="a" style="left:544px;top:113.5px" width="6" height="8" viewBox="0 0 6 8"><path d="M0 0 L5.5 4 L0 8 Z" fill="#8a8a8a"/></svg><svg class="a" style="left:368px;top:129px" width="16" height="14" viewBox="0 0 16 14"><path d="M0.5 1.2 Q0.5 0.5 1.2 0.5 H6 L7 2 H15 Q15.5 2 15.5 2.5 V13.3 Q15.5 13.5 15.3 13.5 H0.7 Q0.5 13.5 0.5 13.3 Z" fill="#55c2f5" stroke="#3eaae4" stroke-width="1"/><path d="M1 3 H15" stroke="#7bd3fb" stroke-width="1"/></svg><div class="t" style="left:390px;top:129px">Max 7</div><svg class="a" style="left:544px;top:131.5px" width="6" height="8" viewBox="0 0 6 8"><path d="M0 0 L5.5 4 L0 8 Z" fill="#8a8a8a"/></svg><svg class="a" style="left:368px;top:147px" width="16" height="14" viewBox="0 0 16 14"><path d="M0.5 1.2 Q0.5 0.5 1.2 0.5 H6 L7 2 H15 Q15.5 2 15.5 2.5 V13.3 Q15.5 13.5 15.3 13.5 H0.7 Q0.5 13.5 0.5 13.3 Z" fill="#55c2f5" stroke="#3eaae4" stroke-width="1"/><path d="M1 3 H15" stroke="#7bd3fb" stroke-width="1"/></svg><div class="t" style="left:390px;top:147px">Myo</div><svg class="a" style="left:544px;top:149.5px" width="6" height="8" viewBox="0 0 6 8"><path d="M0 0 L5.5 4 L0 8 Z" fill="#8a8a8a"/></svg><div class="a" style="left:362px;top:164px;width:190px;height:17px;background:#dcdcdc"></div><svg class="a" style="left:368px;top:165px" width="16" height="14" viewBox="0 0 16 14"><path d="M0.5 1.2 Q0.5 0.5 1.2 0.5 H6 L7 2 H15 Q15.5 2 15.5 2.5 V13.3 Q15.5 13.5 15.3 13.5 H0.7 Q0.5 13.5 0.5 13.3 Z" fill="#55c2f5" stroke="#3eaae4" stroke-width="1"/><path d="M1 3 H15" stroke="#7bd3fb" stroke-width="1"/></svg><div class="t" style="left:390px;top:165px">openFrameworks</div><svg class="a" style="left:544px;top:167.5px" width="6" height="8" viewBox="0 0 6 8"><path d="M0 0 L5.5 4 L0 8 Z" fill="#8a8a8a"/></svg><svg class="a" style="left:368px;top:183px" width="16" height="14" viewBox="0 0 16 14"><path d="M0.5 1.2 Q0.5 0.5 1.2 0.5 H6 L7 2 H15 Q15.5 2 15.5 2.5 V13.3 Q15.5 13.5 15.3 13.5 H0.7 Q0.5 13.5 0.5 13.3 Z" fill="#55c2f5" stroke="#3eaae4" stroke-width="1"/><path d="M1 3 H15" stroke="#7bd3fb" stroke-width="1"/></svg><div class="t" style="left:390px;top:183px">Processing</div><svg class="a" style="left:544px;top:185.5px" width="6" height="8" viewBox="0 0 6 8"><path d="M0 0 L5.5 4 L0 8 Z" fill="#8a8a8a"/></svg><svg class="a" style="left:368px;top:201px" width="16" height="14" viewBox="0 0 16 14"><path d="M0.5 1.2 Q0.5 0.5 1.2 0.5 H6 L7 2 H15 Q15.5 2 15.5 2.5 V13.3 Q15.5 13.5 15.3 13.5 H0.7 Q0.5 13.5 0.5 13.3 Z" fill="#55c2f5" stroke="#3eaae4" stroke-width="1"/><path d="M1 3 H15" stroke="#7bd3fb" stroke-width="1"/></svg><div class="t" style="left:390px;top:201px">Propeller開発</div><svg class="a" style="left:544px;top:203.5px" width="6" height="8" viewBox="0 0 6 8"><path d="M0 0 L5.5 4 L0 8 Z" fill="#8a8a8a"/></svg><svg class="a" style="left:368px;top:219px" width="16" height="14" viewBox="0 0 16 14"><path d="M0.5 1.2 Q0.5 0.5 1.2 0.5 H6 L7 2 H15 Q15.5 2 15.5 2.5 V13.3 Q15.5 13.5 15.3 13.5 H0.7 Q0.5 13.5 0.5 13.3 Z" fill="#55c2f5" stroke="#3eaae4" stroke-width="1"/><path d="M1 3 H15" stroke="#7bd3fb" stroke-width="1"/></svg><div class="t" style="left:390px;top:219px">simpleKinect</div><svg class="a" style="left:544px;top:221.5px" width="6" height="8" viewBox="0 0 6 8"><path d="M0 0 L5.5 4 L0 8 Z" fill="#8a8a8a"/></svg><svg class="a" style="left:368px;top:237px" width="16" height="14" viewBox="0 0 16 14"><path d="M0.5 1.2 Q0.5 0.5 1.2 0.5 H6 L7 2 H15 Q15.5 2 15.5 2.5 V13.3 Q15.5 13.5 15.3 13.5 H0.7 Q0.5 13.5 0.5 13.3 Z" fill="#55c2f5" stroke="#3eaae4" stroke-width="1"/><path d="M1 3 H15" stroke="#7bd3fb" stroke-width="1"/></svg><div class="t" style="left:390px;top:237px">Unity</div><svg class="a" style="left:544px;top:239.5px" width="6" height="8" viewBox="0 0 6 8"><path d="M0 0 L5.5 4 L0 8 Z" fill="#8a8a8a"/></svg><svg class="a" style="left:368px;top:255px" width="16" height="14" viewBox="0 0 16 14"><path d="M0.5 1.2 Q0.5 0.5 1.2 0.5 H6 L7 2 H15 Q15.5 2 15.5 2.5 V13.3 Q15.5 13.5 15.3 13.5 H0.7 Q0.5 13.5 0.5 13.3 Z" fill="#55c2f5" stroke="#3eaae4" stroke-width="1"/><path d="M1 3 H15" stroke="#7bd3fb" stroke-width="1"/></svg><div class="t" style="left:390px;top:255px">Xcode</div><svg class="a" style="left:544px;top:257.5px" width="6" height="8" viewBox="0 0 6 8"><path d="M0 0 L5.5 4 L0 8 Z" fill="#8a8a8a"/></svg><svg class="a" style="left:573px;top:57px" width="16" height="14" viewBox="0 0 16 14"><path d="M0.5 1.2 Q0.5 0.5 1.2 0.5 H6 L7 2 H15 Q15.5 2 15.5 2.5 V13.3 Q15.5 13.5 15.3 13.5 H0.7 Q0.5 13.5 0.5 13.3 Z" fill="#55c2f5" stroke="#3eaae4" stroke-width="1"/><path d="M1 3 H15" stroke="#7bd3fb" stroke-width="1"/></svg><div class="t" style="left:595px;top:57px">addons</div><svg class="a" style="left:749px;top:59.5px" width="6" height="8" viewBox="0 0 6 8"><path d="M0 0 L5.5 4 L0 8 Z" fill="#8a8a8a"/></svg><svg class="a" style="left:573px;top:75px" width="16" height="14" viewBox="0 0 16 14"><path d="M0.5 1.2 Q0.5 0.5 1.2 0.5 H6 L7 2 H15 Q15.5 2 15.5 2.5 V13.3 Q15.5 13.5 15.3 13.5 H0.7 Q0.5 13.5 0.5 13.3 Z" fill="#55c2f5" stroke="#3eaae4" stroke-width="1"/><path d="M1 3 H15" stroke="#7bd3fb" stroke-width="1"/></svg><div class="t" style="left:595px;top:75px">apps</div><svg class="a" style="left:749px;top:77.5px" width="6" height="8" viewBox="0 0 6 8"><path d="M0 0 L5.5 4 L0 8 Z" fill="#8a8a8a"/></svg><svg class="a" style="left:575px;top:92px" width="12" height="15" viewBox="0 0 12 15"><path d="M0.5 0.5 H7.5 L11.5 4.5 V14.5 H0.5 Z" fill="#fdfdfd" stroke="#c2c2c2" stroke-width="1"/><path d="M7.5 0.5 V4.5 H11.5" fill="#efefef" stroke="#c8c8c8" stroke-width="1"/></svg><div class="t" style="left:595px;top:93px">CHANGELOG.md</div><svg class="a" style="left:573px;top:111px" width="16" height="14" viewBox="0 0 16 14"><path d="M0.5 1.2 Q0.5 0.5 1.2 0.5 H6 L7 2 H15 Q15.5 2 15.5 2.5 V13.3 Q15.5 13.5 15.3 13.5 H0.7 Q0.5 13.5 0.5 13.3 Z" fill="#55c2f5" stroke="#3eaae4" stroke-width="1"/><path d="M1 3 H15" stroke="#7bd3fb" stroke-width="1"/></svg><div class="t" style="left:595px;top:111px">docs</div><svg class="a" style="left:749px;top:113.5px" width="6" height="8" viewBox="0 0 6 8"><path d="M0 0 L5.5 4 L0 8 Z" fill="#8a8a8a"/></svg><svg class="a" style="left:573px;top:129px" width="16" height="14" viewBox="0 0 16 14"><path d="M0.5 1.2 Q0.5 0.5 1.2 0.5 H6 L7 2 H15 Q15.5 2 15.5 2.5 V13.3 Q15.5 13.5 15.3 13.5 H0.7 Q0.5 13.5 0.5 13.3 Z" fill="#55c2f5" stroke="#3eaae4" stroke-width="1"/><path d="M1 3 H15" stroke="#7bd3fb" stroke-width="1"/></svg><div class="t" style="left:595px;top:129px">examples</div><svg class="a" style="left:749px;top:131.5px" width="6" height="8" viewBox="0 0 6 8"><path d="M0 0 L5.5 4 L0 8 Z" fill="#8a8a8a"/></svg><svg class="a" style="left:573px;top:147px" width="16" height="14" viewBox="0 0 16 14"><path d="M0.5 1.2 Q0.5 0.5 1.2 0.5 H6 L7 2 H15 Q15.5 2 15.5 2.5 V13.3 Q15.5 13.5 15.3 13.5 H0.7 Q0.5 13.5 0.5 13.3 Z" fill="#55c2f5" stroke="#3eaae4" stroke-width="1"/><path d="M1 3 H15" stroke="#7bd3fb" stroke-width="1"/></svg><div class="t" style="left:595px;top:147px">export</div><svg class="a" style="left:749px;top:149.5px" width="6" height="8" viewBox="0 0 6 8"><path d="M0 0 L5.5 4 L0 8 Z" fill="#8a8a8a"/></svg><svg class="a" style="left:575px;top:164px" width="12" height="15" viewBox="0 0 12 15"><path d="M0.5 0.5 H7.5 L11.5 4.5 V14.5 H0.5 Z" fill="#fdfdfd" stroke="#c2c2c2" stroke-width="1"/><path d="M7.5 0.5 V4.5 H11.5" fill="#efefef" stroke="#c8c8c8" stroke-width="1"/></svg><div class="t" style="left:595px;top:165px">INSTALL.md</div><svg class="a" style="left:573px;top:183px" width="16" height="14" viewBox="0 0 16 14"><path d="M0.5 1.2 Q0.5 0.5 1.2 0.5 H6 L7 2 H15 Q15.5 2 15.5 2.5 V13.3 Q15.5 13.5 15.3 13.5 H0.7 Q0.5 13.5 0.5 13.3 Z" fill="#55c2f5" stroke="#3eaae4" stroke-width="1"/><path d="M1 3 H15" stroke="#7bd3fb" stroke-width="1"/></svg><div class="t" style="left:595px;top:183px">libs</div><svg class="a" style="left:749px;top:185.5px" width="6" height="8" viewBox="0 0 6 8"><path d="M0 0 L5.5 4 L0 8 Z" fill="#8a8a8a"/></svg><svg class="a" style="left:575px;top:200px" width="12" height="15" viewBox="0 0 12 15"><path d="M0.5 0.5 H7.5 L11.5 4.5 V14.5 H0.5 Z" fill="#fdfdfd" stroke="#c2c2c2" stroke-width="1"/><path d="M7.5 0.5 V4.5 H11.5" fill="#efefef" stroke="#c8c8c8" stroke-width="1"/></svg><div class="t" style="left:595px;top:201px">LICENSE.md</div><svg class="a" style="left:573px;top:219px" width="16" height="14" viewBox="0 0 16 14"><path d="M0.5 1.2 Q0.5 0.5 1.2 0.5 H6 L7 2 H15 Q15.5 2 15.5 2.5 V13.3 Q15.5 13.5 15.3 13.5 H0.7 Q0.5 13.5 0.5 13.3 Z" fill="#55c2f5" stroke="#3eaae4" stroke-width="1"/><path d="M1 3 H15" stroke="#7bd3fb" stroke-width="1"/></svg><div class="t" style="left:595px;top:219px">other</div><svg class="a" style="left:749px;top:221.5px" width="6" height="8" viewBox="0 0 6 8"><path d="M0 0 L5.5 4 L0 8 Z" fill="#8a8a8a"/></svg><svg class="a" style="left:573px;top:237px" width="16" height="14" viewBox="0 0 16 14"><path d="M0.5 1.2 Q0.5 0.5 1.2 0.5 H6 L7 2 H15 Q15.5 2 15.5 2.5 V13.3 Q15.5 13.5 15.3 13.5 H0.7 Q0.5 13.5 0.5 13.3 Z" fill="#55c2f5" stroke="#3eaae4" stroke-width="1"/><path d="M1 3 H15" stroke="#7bd3fb" stroke-width="1"/></svg><div class="t" style="left:595px;top:237px">projectGenerator_osx</div><svg class="a" style="left:749px;top:239.5px" width="6" height="8" viewBox="0 0 6 8"><path d="M0 0 L5.5 4 L0 8 Z" fill="#8a8a8a"/></svg><svg class="a" style="left:575px;top:254px" width="12" height="15" viewBox="0 0 12 15"><path d="M0.5 0.5 H7.5 L11.5 4.5 V14.5 H0.5 Z" fill="#fdfdfd" stroke="#c2c2c2" stroke-width="1"/><path d="M7.5 0.5 V4.5 H11.5" fill="#efefef" stroke="#c8c8c8" stroke-width="1"/></svg><div class="t" style="left:595px;top:255px">README.md</div><div class="a" style="left:567px;top:272px;width:190px;height:17px;background:#dcdcdc"></div><svg class="a" style="left:573px;top:273px" width="16" height="14" viewBox="0 0 16 14"><path d="M0.5 1.2 Q0.5 0.5 1.2 0.5 H6 L7 2 H15 Q15.5 2 15.5 2.5 V13.3 Q15.5 13.5 15.3 13.5 H0.7 Q0.5 13.5 0.5 13.3 Z" fill="#55c2f5" stroke="#3eaae4" stroke-width="1"/><path d="M1 3 H15" stroke="#7bd3fb" stroke-width="1"/></svg><div class="t" style="left:595px;top:273px">sample_Codes</div><svg class="a" style="left:749px;top:275.5px" width="6" height="8" viewBox="0 0 6 8"><path d="M0 0 L5.5 4 L0 8 Z" fill="#8a8a8a"/></svg><svg class="a" style="left:573px;top:291px" width="16" height="14" viewBox="0 0 16 14"><path d="M0.5 1.2 Q0.5 0.5 1.2 0.5 H6 L7 2 H15 Q15.5 2 15.5 2.5 V13.3 Q15.5 13.5 15.3 13.5 H0.7 Q0.5 13.5 0.5 13.3 Z" fill="#55c2f5" stroke="#3eaae4" stroke-width="1"/><path d="M1 3 H15" stroke="#7bd3fb" stroke-width="1"/></svg><div class="t" style="left:595px;top:291px">scripts</div><svg class="a" style="left:749px;top:293.5px" width="6" height="8" viewBox="0 0 6 8"><path d="M0 0 L5.5 4 L0 8 Z" fill="#8a8a8a"/></svg><svg class="a" style="left:778px;top:57px" width="16" height="14" viewBox="0 0 16 14"><path d="M0.5 1.2 Q0.5 0.5 1.2 0.5 H6 L7 2 H15 Q15.5 2 15.5 2.5 V13.3 Q15.5 13.5 15.3 13.5 H0.7 Q0.5 13.5 0.5 13.3 Z" fill="#55c2f5" stroke="#3eaae4" stroke-width="1"/><path d="M1 3 H15" stroke="#7bd3fb" stroke-width="1"/></svg><div class="t" style="left:800px;top:57px">01-Basics</div><svg class="a" style="left:954px;top:59.5px" width="6" height="8" viewBox="0 0 6 8"><path d="M0 0 L5.5 4 L0 8 Z" fill="#8a8a8a"/></svg><svg class="a" style="left:778px;top:75px" width="16" height="14" viewBox="0 0 16 14"><path d="M0.5 1.2 Q0.5 0.5 1.2 0.5 H6 L7 2 H15 Q15.5 2 15.5 2.5 V13.3 Q15.5 13.5 15.3 13.5 H0.7 Q0.5 13.5 0.5 13.3 Z" fill="#55c2f5" stroke="#3eaae4" stroke-width="1"/><path d="M1 3 H15" stroke="#7bd3fb" stroke-width="1"/></svg><div class="t" style="left:800px;top:75px">02-2D</div><svg class="a" style="left:954px;top:77.5px" width="6" height="8" viewBox="0 0 6 8"><path d="M0 0 L5.5 4 L0 8 Z" fill="#8a8a8a"/></svg><svg class="a" style="left:778px;top:93px" width="16" height="14" viewBox="0 0 16 14"><path d="M0.5 1.2 Q0.5 0.5 1.2 0.5 H6 L7 2 H15 Q15.5 2 15.5 2.5 V13.3 Q15.5 13.5 15.3 13.5 H0.7 Q0.5 13.5 0.5 13.3 Z" fill="#55c2f5" stroke="#3eaae4" stroke-width="1"/><path d="M1 3 H15" stroke="#7bd3fb" stroke-width="1"/></svg><div class="t" style="left:800px;top:93px">03-Particles</div><svg class="a" style="left:954px;top:95.5px" width="6" height="8" viewBox="0 0 6 8"><path d="M0 0 L5.5 4 L0 8 Z" fill="#8a8a8a"/></svg><svg class="a" style="left:778px;top:111px" width="16" height="14" viewBox="0 0 16 14"><path d="M0.5 1.2 Q0.5 0.5 1.2 0.5 H6 L7 2 H15 Q15.5 2 15.5 2.5 V13.3 Q15.5 13.5 15.3 13.5 H0.7 Q0.5 13.5 0.5 13.3 Z" fill="#55c2f5" stroke="#3eaae4" stroke-width="1"/><path d="M1 3 H15" stroke="#7bd3fb" stroke-width="1"/></svg><div class="t" style="left:800px;top:111px">04-Images</div><svg class="a" style="left:954px;top:113.5px" width="6" height="8" viewBox="0 0 6 8"><path d="M0 0 L5.5 4 L0 8 Z" fill="#8a8a8a"/></svg><svg class="a" style="left:778px;top:129px" width="16" height="14" viewBox="0 0 16 14"><path d="M0.5 1.2 Q0.5 0.5 1.2 0.5 H6 L7 2 H15 Q15.5 2 15.5 2.5 V13.3 Q15.5 13.5 15.3 13.5 H0.7 Q0.5 13.5 0.5 13.3 Z" fill="#55c2f5" stroke="#3eaae4" stroke-width="1"/><path d="M1 3 H15" stroke="#7bd3fb" stroke-width="1"/></svg><div class="t" style="left:800px;top:129px">05-Video</div><svg class="a" style="left:954px;top:131.5px" width="6" height="8" viewBox="0 0 6 8"><path d="M0 0 L5.5 4 L0 8 Z" fill="#8a8a8a"/></svg><svg class="a" style="left:778px;top:147px" width="16" height="14" viewBox="0 0 16 14"><path d="M0.5 1.2 Q0.5 0.5 1.2 0.5 H6 L7 2 H15 Q15.5 2 15.5 2.5 V13.3 Q15.5 13.5 15.3 13.5 H0.7 Q0.5 13.5 0.5 13.3 Z" fill="#55c2f5" stroke="#3eaae4" stroke-width="1"/><path d="M1 3 H15" stroke="#7bd3fb" stroke-width="1"/></svg><div class="t" style="left:800px;top:147px">06-Sound</div><svg class="a" style="left:954px;top:149.5px" width="6" height="8" viewBox="0 0 6 8"><path d="M0 0 L5.5 4 L0 8 Z" fill="#8a8a8a"/></svg><svg class="a" style="left:778px;top:165px" width="16" height="14" viewBox="0 0 16 14"><path d="M0.5 1.2 Q0.5 0.5 1.2 0.5 H6 L7 2 H15 Q15.5 2 15.5 2.5 V13.3 Q15.5 13.5 15.3 13.5 H0.7 Q0.5 13.5 0.5 13.3 Z" fill="#55c2f5" stroke="#3eaae4" stroke-width="1"/><path d="M1 3 H15" stroke="#7bd3fb" stroke-width="1"/></svg><div class="t" style="left:800px;top:165px">07-3D</div><svg class="a" style="left:954px;top:167.5px" width="6" height="8" viewBox="0 0 6 8"><path d="M0 0 L5.5 4 L0 8 Z" fill="#8a8a8a"/></svg><div class="a" style="left:772px;top:182px;width:190px;height:17px;background:#dcdcdc"></div><svg class="a" style="left:778px;top:183px" width="16" height="14" viewBox="0 0 16 14"><path d="M0.5 1.2 Q0.5 0.5 1.2 0.5 H6 L7 2 H15 Q15.5 2 15.5 2.5 V13.3 Q15.5 13.5 15.3 13.5 H0.7 Q0.5 13.5 0.5 13.3 Z" fill="#55c2f5" stroke="#3eaae4" stroke-width="1"/><path d="M1 3 H15" stroke="#7bd3fb" stroke-width="1"/></svg><div class="t" style="left:800px;top:183px">08-Shaders</div><svg class="a" style="left:954px;top:185.5px" width="6" height="8" viewBox="0 0 6 8"><path d="M0 0 L5.5 4 L0 8 Z" fill="#8a8a8a"/></svg><svg class="a" style="left:778px;top:201px" width="16" height="14" viewBox="0 0 16 14"><path d="M0.5 1.2 Q0.5 0.5 1.2 0.5 H6 L7 2 H15 Q15.5 2 15.5 2.5 V13.3 Q15.5 13.5 15.3 13.5 H0.7 Q0.5 13.5 0.5 13.3 Z" fill="#55c2f5" stroke="#3eaae4" stroke-width="1"/><path d="M1 3 H15" stroke="#7bd3fb" stroke-width="1"/></svg><div class="t" style="left:800px;top:201px">09-OpenCV</div><svg class="a" style="left:954px;top:203.5px" width="6" height="8" viewBox="0 0 6 8"><path d="M0 0 L5.5 4 L0 8 Z" fill="#8a8a8a"/></svg><svg class="a" style="left:778px;top:219px" width="16" height="14" viewBox="0 0 16 14"><path d="M0.5 1.2 Q0.5 0.5 1.2 0.5 H6 L7 2 H15 Q15.5 2 15.5 2.5 V13.3 Q15.5 13.5 15.3 13.5 H0.7 Q0.5 13.5 0.5 13.3 Z" fill="#55c2f5" stroke="#3eaae4" stroke-width="1"/><path d="M1 3 H15" stroke="#7bd3fb" stroke-width="1"/></svg><div class="t" style="left:800px;top:219px">10-DepthCameras</div><svg class="a" style="left:954px;top:221.5px" width="6" height="8" viewBox="0 0 6 8"><path d="M0 0 L5.5 4 L0 8 Z" fill="#8a8a8a"/></svg><svg class="a" style="left:778px;top:237px" width="16" height="14" viewBox="0 0 16 14"><path d="M0.5 1.2 Q0.5 0.5 1.2 0.5 H6 L7 2 H15 Q15.5 2 15.5 2.5 V13.3 Q15.5 13.5 15.3 13.5 H0.7 Q0.5 13.5 0.5 13.3 Z" fill="#55c2f5" stroke="#3eaae4" stroke-width="1"/><path d="M1 3 H15" stroke="#7bd3fb" stroke-width="1"/></svg><div class="t" style="left:800px;top:237px">11-Networking</div><svg class="a" style="left:954px;top:239.5px" width="6" height="8" viewBox="0 0 6 8"><path d="M0 0 L5.5 4 L0 8 Z" fill="#8a8a8a"/></svg><svg class="a" style="left:778px;top:255px" width="16" height="14" viewBox="0 0 16 14"><path d="M0.5 1.2 Q0.5 0.5 1.2 0.5 H6 L7 2 H15 Q15.5 2 15.5 2.5 V13.3 Q15.5 13.5 15.3 13.5 H0.7 Q0.5 13.5 0.5 13.3 Z" fill="#55c2f5" stroke="#3eaae4" stroke-width="1"/><path d="M1 3 H15" stroke="#7bd3fb" stroke-width="1"/></svg><div class="t" style="left:800px;top:255px">13-PerlinNoise</div><svg class="a" style="left:954px;top:257.5px" width="6" height="8" viewBox="0 0 6 8"><path d="M0 0 L5.5 4 L0 8 Z" fill="#8a8a8a"/></svg><svg class="a" style="left:983px;top:57px" width="16" height="14" viewBox="0 0 16 14"><path d="M0.5 1.2 Q0.5 0.5 1.2 0.5 H6 L7 2 H15 Q15.5 2 15.5 2.5 V13.3 Q15.5 13.5 15.3 13.5 H0.7 Q0.5 13.5 0.5 13.3 Z" fill="#55c2f5" stroke="#3eaae4" stroke-width="1"/><path d="M1 3 H15" stroke="#7bd3fb" stroke-width="1"/></svg><div class="t" style="left:1005px;top:57px">01-ShaderInverting</div><svg class="a" style="left:1185px;top:59.5px" width="6" height="8" viewBox="0 0 6 8"><path d="M0 0 L5.5 4 L0 8 Z" fill="#8a8a8a"/></svg><svg class="a" style="left:983px;top:75px" width="16" height="14" viewBox="0 0 16 14"><path d="M0.5 1.2 Q0.5 0.5 1.2 0.5 H6 L7 2 H15 Q15.5 2 15.5 2.5 V13.3 Q15.5 13.5 15.3 13.5 H0.7 Q0.5 13.5 0.5 13.3 Z" fill="#55c2f5" stroke="#3eaae4" stroke-width="1"/><path d="M1 3 H15" stroke="#7bd3fb" stroke-width="1"/></svg><div class="t" style="left:1005px;top:75px">02-ShaderHorizDistortion</div><svg class="a" style="left:1185px;top:77.5px" width="6" height="8" viewBox="0 0 6 8"><path d="M0 0 L5.5 4 L0 8 Z" fill="#8a8a8a"/></svg><svg class="a" style="left:983px;top:93px" width="16" height="14" viewBox="0 0 16 14"><path d="M0.5 1.2 Q0.5 0.5 1.2 0.5 H6 L7 2 H15 Q15.5 2 15.5 2.5 V13.3 Q15.5 13.5 15.3 13.5 H0.7 Q0.5 13.5 0.5 13.3 Z" fill="#55c2f5" stroke="#3eaae4" stroke-width="1"/><path d="M1 3 H15" stroke="#7bd3fb" stroke-width="1"/></svg><div class="t" style="left:1005px;top:93px">03-ShaderLiquify</div><svg class="a" style="left:1185px;top:95.5px" width="6" height="8" viewBox="0 0 6 8"><path d="M0 0 L5.5 4 L0 8 Z" fill="#8a8a8a"/></svg><svg class="a" style="left:983px;top:111px" width="16" height="14" viewBox="0 0 16 14"><path d="M0.5 1.2 Q0.5 0.5 1.2 0.5 H6 L7 2 H15 Q15.5 2 15.5 2.5 V13.3 Q15.5 13.5 15.3 13.5 H0.7 Q0.5 13.5 0.5 13.3 Z" fill="#55c2f5" stroke="#3eaae4" stroke-width="1"/><path d="M1 3 H15" stroke="#7bd3fb" stroke-width="1"/></svg><div class="t" style="left:1005px;top:111px">04-ShaderMasking</div><svg class="a" style="left:1185px;top:113.5px" width="6" height="8" viewBox="0 0 6 8"><path d="M0 0 L5.5 4 L0 8 Z" fill="#8a8a8a"/></svg><svg class="a" style="left:983px;top:129px" width="16" height="14" viewBox="0 0 16 14"><path d="M0.5 1.2 Q0.5 0.5 1.2 0.5 H6 L7 2 H15 Q15.5 2 15.5 2.5 V13.3 Q15.5 13.5 15.3 13.5 H0.7 Q0.5 13.5 0.5 13.3 Z" fill="#55c2f5" stroke="#3eaae4" stroke-width="1"/><path d="M1 3 H15" stroke="#7bd3fb" stroke-width="1"/></svg><div class="t" style="left:1005px;top:129px">05-ShaderAudioReactive</div><svg class="a" style="left:1185px;top:131.5px" width="6" height="8" viewBox="0 0 6 8"><path d="M0 0 L5.5 4 L0 8 Z" fill="#8a8a8a"/></svg><svg class="a" style="left:983px;top:147px" width="16" height="14" viewBox="0 0 16 14"><path d="M0.5 1.2 Q0.5 0.5 1.2 0.5 H6 L7 2 H15 Q15.5 2 15.5 2.5 V13.3 Q15.5 13.5 15.3 13.5 H0.7 Q0.5 13.5 0.5 13.3 Z" fill="#55c2f5" stroke="#3eaae4" stroke-width="1"/><path d="M1 3 H15" stroke="#7bd3fb" stroke-width="1"/></svg><div class="t" style="left:1005px;top:147px">06-VertexDeformation</div><svg class="a" style="left:1185px;top:149.5px" width="6" height="8" viewBox="0 0 6 8"><path d="M0 0 L5.5 4 L0 8 Z" fill="#8a8a8a"/></svg><svg class="a" style="left:983px;top:165px" width="16" height="14" viewBox="0 0 16 14"><path d="M0.5 1.2 Q0.5 0.5 1.2 0.5 H6 L7 2 H15 Q15.5 2 15.5 2.5 V13.3 Q15.5 13.5 15.3 13.5 H0.7 Q0.5 13.5 0.5 13.3 Z" fill="#55c2f5" stroke="#3eaae4" stroke-width="1"/><path d="M1 3 H15" stroke="#7bd3fb" stroke-width="1"/></svg><div class="t" style="left:1005px;top:165px">07-GeometryFurryCarpet</div><svg class="a" style="left:1185px;top:167.5px" width="6" height="8" viewBox="0 0 6 8"><path d="M0 0 L5.5 4 L0 8 Z" fill="#8a8a8a"/></svg><svg class="a" style="left:985px;top:182px" width="12" height="15" viewBox="0 0 12 15"><path d="M0.5 0.5 H7.5 L11.5 4.5 V14.5 H0.5 Z" fill="#fdfdfd" stroke="#c2c2c2" stroke-width="1"/><path d="M7.5 0.5 V4.5 H11.5" fill="#efefef" stroke="#c8c8c8" stroke-width="1"/><path d="M5 0.5 V8" stroke="#222" stroke-width="1.3"/><rect x="4.2" y="7.5" width="1.6" height="2.5" fill="#222"/></svg><div class="t" style="left:1005px;top:183px">webgl-noise.zip</div></div><div class="win" style="left:557px;top:342px;width:806px;height:570px;background:#fff;border-radius:5px 5px 0 0;box-shadow:0 0 0 1px rgba(0,0,0,.28), 0 10px 30px rgba(0,0,0,.35)"><div class="a" style="left:0;top:0;width:806px;height:54px;background:linear-gradient(180deg,#e7e7e7 0%,#dfdfdf 40%,#d0d0d0 100%)"></div><div class="a" style="left:0;top:0;width:806px;height:1px;background:#f6f6f6"></div><div class="a" style="left:0;top:54px;width:806px;height:1px;background:#b1b1b1"></div><div class="a" style="left:8px;top:5px;width:12px;height:12px;border-radius:50%;background:#fa3c42;border:1px solid #e0343a"></div><div class="a" style="left:28px;top:5px;width:12px;height:12px;border-radius:50%;background:#fdb728;border:1px solid #e0a020"></div><div class="a" style="left:48px;top:5px;width:12px;height:12px;border-radius:50%;background:#22c63c;border:1px solid #1aa832"></div><svg class="a" style="left:356px;top:4px" width="16" height="14" viewBox="0 0 16 14"><path d="M0.5 1.2 Q0.5 0.5 1.2 0.5 H6 L7 2 H15 Q15.5 2 15.5 2.5 V13.3 Q15.5 13.5 15.3 13.5 H0.7 Q0.5 13.5 0.5 13.3 Z" fill="#55c2f5" stroke="#3eaae4" stroke-width="1"/><path d="M1 3 H15" stroke="#7bd3fb" stroke-width="1"/></svg><div class="t" style="left:376px;top:4px;color:#4d4d4d">08-Shaders</div><div class="tb" style="left:8px;top:24px;width:26px;height:22px;background:#fff;box-shadow:0 0 0 1px rgba(0,0,0,.05), 0 1px 0 rgba(0,0,0,.14);"></div><div class="tb" style="left:35px;top:24px;width:26px;height:22px;background:#fff;box-shadow:0 0 0 1px rgba(0,0,0,.05), 0 1px 0 rgba(0,0,0,.14);"></div><svg class="a" style="left:16px;top:29px" width="10" height="12" viewBox="0 0 10 12"><path d="M7 1 L2 6 L7 11" fill="none" stroke="#5c5c5c" stroke-width="1.4"/></svg><svg class="a" style="left:43px;top:29px" width="10" height="12" viewBox="0 0 10 12"><path d="M3 1 L8 6 L3 11" fill="none" stroke="#c4c4c4" stroke-width="1.4"/></svg><div class="tb" style="left:143px;top:24px;width:112px;height:22px;background:#fff;box-shadow:0 0 0 1px rgba(0,0,0,.05), 0 1px 0 rgba(0,0,0,.14)"></div><div class="a" style="left:172px;top:24px;width:28px;height:22px;background:#676767"></div><div class="a" style="left:200px;top:25px;width:1px;height:20px;background:#d0d0d0"></div><div class="a" style="left:226px;top:25px;width:1px;height:20px;background:#d0d0d0"></div><svg class="a" style="left:152px;top:29px" width="12" height="12" viewBox="0 0 12 12"><g fill="none" stroke="#5f5f5f" stroke-width="1.1"><rect x="1.5" y="1.5" width="3" height="3" rx="0.4"/><rect x="7.5" y="1.5" width="3" height="3" rx="0.4"/><rect x="1.5" y="7.5" width="3" height="3" rx="0.4"/><rect x="7.5" y="7.5" width="3" height="3" rx="0.4"/></g></svg><svg class="a" style="left:179px;top:29px" width="16" height="12" viewBox="0 0 16 12"><g fill="#f2f2f2"><rect x="0" y="1" width="14" height="1.1"/><rect x="0" y="4.1" width="14" height="1.1"/><rect x="0" y="7.2" width="14" height="1.1"/><rect x="0" y="10.3" width="14" height="1.1"/></g></svg><svg class="a" style="left:205px;top:29px" width="17" height="12" viewBox="0 0 17 12"><g fill="none" stroke="#5f5f5f" stroke-width="1.1"><rect x="0.55" y="1.05" width="15" height="9.6"/><path d="M5.5 1 V10.6 M10.5 1 V10.6"/></g></svg><svg class="a" style="left:231px;top:29px" width="19" height="12" viewBox="0 0 19 12"><g fill="none" stroke="#5f5f5f" stroke-width="1"><path d="M0.5 0.5 V10.5 M2.5 0.5 V10.5 M16.5 0.5 V10.5 M18.5 0.5 V10.5"/><rect x="5.5" y="1" width="7.5" height="7.5"/></g></svg><div class="tb" style="left:263px;top:24px;width:40px;height:22px;background:#fff;box-shadow:0 0 0 1px rgba(0,0,0,.05), 0 1px 0 rgba(0,0,0,.14);"></div><div class="tb" style="left:311px;top:24px;width:40px;height:22px;background:#fff;box-shadow:0 0 0 1px rgba(0,0,0,.05), 0 1px 0 rgba(0,0,0,.14);"></div><div class="tb" style="left:359px;top:24px;width:40px;height:22px;background:#fff;box-shadow:0 0 0 1px rgba(0,0,0,.05), 0 1px 0 rgba(0,0,0,.14);"></div><div class="tb" style="left:407px;top:24px;width:40px;height:22px;background:#fff;box-shadow:0 0 0 1px rgba(0,0,0,.05), 0 1px 0 rgba(0,0,0,.14);"></div><svg class="a" style="left:270px;top:29px" width="30" height="14" viewBox="0 0 30 14"><g fill="none" stroke="#5f5f5f" stroke-width="1"><path d="M0 0.5 H14 M0 7.5 H14"/><rect x="0.5" y="2.5" width="3" height="3"/><rect x="5.5" y="2.5" width="3" height="3"/><rect x="10.5" y="2.5" width="3" height="3"/><rect x="0.5" y="9.5" width="3" height="3"/><rect x="5.5" y="9.5" width="3" height="3"/><rect x="10.5" y="9.5" width="3" height="3"/><path d="M22 5 L25 8 L28 5" stroke-width="1.3"/></g></svg><svg class="a" style="left:318px;top:28px" width="30" height="14" viewBox="0 0 30 14"><rect x="6" y="0" width="2.4" height="14" fill="#5f5f5f" transform="rotate(0 7.2 7)"/><rect x="6" y="0" width="2.4" height="14" fill="#5f5f5f" transform="rotate(45 7.2 7)"/><rect x="6" y="0" width="2.4" height="14" fill="#5f5f5f" transform="rotate(90 7.2 7)"/><rect x="6" y="0" width="2.4" height="14" fill="#5f5f5f" transform="rotate(135 7.2 7)"/><circle cx="7.2" cy="7" r="5" fill="#5f5f5f"/><circle cx="7.2" cy="7" r="2" fill="#fbfbfb"/><path d="M22 5 L25 8 L28 5" fill="none" stroke="#5f5f5f" stroke-width="1.3"/></svg><svg class="a" style="left:373px;top:27px" width="12" height="16" viewBox="0 0 12 16"><path d="M4 6 H1 V15 H11 V6 H8 M6 11 V1 M3 4 L6 1 L9 4" fill="none" stroke="#b9b9b9" stroke-width="1.1"/></svg><svg class="a" style="left:418px;top:29px" width="18" height="12" viewBox="0 0 18 12"><path d="M5 1 H16.5 V11 H5 L0.8 6 Z" fill="none" stroke="#b9b9b9" stroke-width="1.1"/><circle cx="4.5" cy="6" r="0.9" fill="#b9b9b9"/></svg><div class="tb" style="left:534px;top:24px;width:264px;height:22px;background:#fbfbfb;border:1px solid #c4c4c4;border-bottom-color:#b9b9b9"></div><svg class="a" style="left:626px;top:29px" width="12" height="12" viewBox="0 0 12 12"><circle cx="5" cy="5" r="3.8" fill="none" stroke="#6d6d6d" stroke-width="1.1"/><path d="M7.8 7.8 L11 11" stroke="#6d6d6d" stroke-width="1.2"/></svg><div class="t" style="left:643px;top:27px;color:#b3b3b3">Search</div><div class="a" style="left:0;top:55px;width:138px;height:503px;background:#efefef"></div><div class="a" style="left:138px;top:55px;width:1px;height:503px;background:#c9c9c9"></div><div class="sh" style="left:9px;top:63px">Favorites</div><div class="sh" style="left:9px;top:91px">Devices</div><div class="sh" style="left:9px;top:145px">Shared</div><svg class="a" style="left:18px;top:111px" width="18" height="18" viewBox="0 0 18 18"><circle cx="9" cy="9" r="8.3" fill="#d9d9d9" stroke="#9a9a9a" stroke-width="1"/><circle cx="9" cy="9" r="5.5" fill="none" stroke="#b5b5b5" stroke-width="0.8"/><circle cx="9" cy="9" r="2.6" fill="#f2f2f2" stroke="#999" stroke-width="1"/></svg><div class="si" style="left:42px;top:112px">Remote Disc</div><svg class="a" style="left:18px;top:167px" width="19" height="16" viewBox="0 0 19 16"><rect x="0.6" y="0.6" width="17.8" height="11.5" rx="1" fill="#e3e3e3" stroke="#8c8c8c" stroke-width="1.1"/><rect x="7" y="12.5" width="5" height="2" fill="#9a9a9a"/><rect x="5" y="14.3" width="9" height="1.2" fill="#9a9a9a"/></svg><div class="si" style="left:42px;top:167px">nagasm_...</div><svg class="a" style="left:122px;top:170px" width="10" height="10" viewBox="0 0 10 10"><path d="M5 0.5 L9.5 6 H0.5 Z" fill="#666"/><rect x="0.5" y="7.5" width="9" height="2" fill="#666"/></svg><svg class="a" style="left:18px;top:193px" width="18" height="18" viewBox="0 0 18 18"><circle cx="9" cy="9" r="8.4" fill="#9c9c9c" stroke="#8a8a8a" stroke-width="0.8"/><path d="M3 6 Q6 3 9 5 Q12 8 15 6 M2.5 11 Q6 9 9 12 Q12 14 15.5 11 M6 2 Q9 9 6 16 M12 2 Q10 9 12 16" fill="none" stroke="#e2e2e2" stroke-width="0.8"/></svg><div class="si" style="left:42px;top:194px">All...</div><div class="a" style="left:139px;top:55px;width:667px;height:22px;background:#fafafa"></div><div class="a" style="left:139px;top:77px;width:667px;height:1px;background:#d7d7d7"></div><div class="a" style="left:500px;top:58px;width:1px;height:16px;background:#e0e0e0"></div><div class="a" style="left:597px;top:58px;width:1px;height:16px;background:#e0e0e0"></div><div class="a" style="left:726px;top:58px;width:1px;height:16px;background:#e0e0e0"></div><div class="t" style="left:145px;top:59px;font-size:11.5px;font-weight:bold;color:#262626">Name</div><svg class="a" style="left:484px;top:62px" width="9" height="6" viewBox="0 0 9 6"><path d="M1 5 L4.5 1.5 L8 5" fill="none" stroke="#333" stroke-width="1.5"/></svg><div class="t" style="left:500px;top:59px;width:84px;text-align:right;font-size:12px;color:#262626">Size</div><div class="t" style="left:609px;top:59px;font-size:12px;color:#262626">Date Modified</div><div class="a" style="left:139px;top:78px;width:667px;height:2px;background:#f3f3f3"></div><div class="a" style="left:139px;top:80px;width:667px;height:19px;background:#f3f3f3"></div><div class="a" style="left:139px;top:118px;width:667px;height:19px;background:#f3f3f3"></div><div class="a" style="left:139px;top:156px;width:667px;height:19px;background:#f3f3f3"></div><div class="a" style="left:139px;top:194px;width:667px;height:19px;background:#f3f3f3"></div><div class="a" style="left:139px;top:232px;width:667px;height:19px;background:#f3f3f3"></div><div class="a" style="left:139px;top:270px;width:667px;height:19px;background:#f3f3f3"></div><div class="a" style="left:139px;top:308px;width:667px;height:19px;background:#f3f3f3"></div><div class="a" style="left:139px;top:346px;width:667px;height:19px;background:#f3f3f3"></div><div class="a" style="left:139px;top:384px;width:667px;height:19px;background:#f3f3f3"></div><div class="a" style="left:139px;top:422px;width:667px;height:19px;background:#f3f3f3"></div><div class="a" style="left:139px;top:460px;width:667px;height:19px;background:#f3f3f3"></div><div class="a" style="left:139px;top:498px;width:667px;height:19px;background:#f3f3f3"></div><div class="a" style="left:139px;top:536px;width:667px;height:19px;background:#f3f3f3"></div><svg class="a" style="left:147px;top:86px" width="9" height="8" viewBox="0 0 9 8"><path d="M0 0 H9 L4.5 8 Z" fill="#7f7f7f"/></svg><svg class="a" style="left:165px;top:82px" width="16" height="14" viewBox="0 0 16 14"><path d="M0.5 1.2 Q0.5 0.5 1.2 0.5 H6 L7 2 H15 Q15.5 2 15.5 2.5 V13.3 Q15.5 13.5 15.3 13.5 H0.7 Q0.5 13.5 0.5 13.3 Z" fill="#55c2f5" stroke="#3eaae4" stroke-width="1"/><path d="M1 3 H15" stroke="#7bd3fb" stroke-width="1"/></svg><div class="t" style="left:187px;top:82px">01-ShaderInverting</div><div class="t" style="left:484px;top:82px;width:100px;text-align:right;color:#7b7b7b">174 KB</div><div class="t" style="left:609px;top:82px;color:#7b7b7b">6/14/15, 14:18</div><svg class="a" style="left:168px;top:105px" width="9" height="8" viewBox="0 0 9 8"><path d="M0 0 H9 L4.5 8 Z" fill="#7f7f7f"/></svg><svg class="a" style="left:186px;top:101px" width="16" height="14" viewBox="0 0 16 14"><path d="M0.5 1.2 Q0.5 0.5 1.2 0.5 H6 L7 2 H15 Q15.5 2 15.5 2.5 V13.3 Q15.5 13.5 15.3 13.5 H0.7 Q0.5 13.5 0.5 13.3 Z" fill="#55c2f5" stroke="#3eaae4" stroke-width="1"/><path d="M1 3 H15" stroke="#7bd3fb" stroke-width="1"/></svg><div class="t" style="left:208px;top:101px">data</div><div class="t" style="left:484px;top:101px;width:100px;text-align:right;color:#7b7b7b">165 KB</div><div class="t" style="left:609px;top:101px;color:#7b7b7b">9/18/13, 14:05</div><svg class="a" style="left:209px;top:119px" width="12" height="15" viewBox="0 0 12 15"><path d="M0.5 0.5 H7.5 L11.5 4.5 V14.5 H0.5 Z" fill="#fdfdfd" stroke="#c2c2c2" stroke-width="1"/><path d="M7.5 0.5 V4.5 H11.5" fill="#efefef" stroke="#c8c8c8" stroke-width="1"/><text x="2.3" y="12.8" font-family="Liberation Sans" font-weight="bold" font-size="10" fill="#3a1d78">c</text></svg><div class="t" style="left:229px;top:120px">shaderFrag.c</div><div class="t" style="left:484px;top:120px;width:100px;text-align:right;color:#7b7b7b">551 bytes</div><div class="t" style="left:609px;top:120px;color:#7b7b7b">7/24/13, 13:29</div><svg class="a" style="left:209px;top:138px" width="12" height="15" viewBox="0 0 12 15"><path d="M0.5 0.5 H7.5 L11.5 4.5 V14.5 H0.5 Z" fill="#fdfdfd" stroke="#c2c2c2" stroke-width="1"/><path d="M7.5 0.5 V4.5 H11.5" fill="#efefef" stroke="#c8c8c8" stroke-width="1"/><text x="2.3" y="12.8" font-family="Liberation Sans" font-weight="bold" font-size="10" fill="#3a1d78">c</text></svg><div class="t" style="left:229px;top:139px">shaderVert.c</div><div class="t" style="left:484px;top:139px;width:100px;text-align:right;color:#7b7b7b">244 bytes</div><div class="t" style="left:609px;top:139px;color:#7b7b7b">7/24/13, 13:30</div><svg class="a" style="left:209px;top:157px" width="12" height="15" viewBox="0 0 12 15"><path d="M0.5 0.5 H7.5 L11.5 4.5 V14.5 H0.5 Z" fill="#fdfdfd" stroke="#c2c2c2" stroke-width="1"/><path d="M7.5 0.5 V4.5 H11.5" fill="#efefef" stroke="#c8c8c8" stroke-width="1"/><rect x="1.5" y="7.5" width="8" height="4" fill="#6f8fbf"/><ellipse cx="6.5" cy="11.3" rx="3" ry="1.6" fill="#7a6a5a"/></svg><div class="t" style="left:229px;top:158px">sunflower.png</div><div class="t" style="left:484px;top:158px;width:100px;text-align:right;color:#7b7b7b">164 KB</div><div class="t" style="left:609px;top:158px;color:#7b7b7b">2/26/13, 15:10</div><svg class="a" style="left:168px;top:181px" width="9" height="8" viewBox="0 0 9 8"><path d="M0 0 H9 L4.5 8 Z" fill="#7f7f7f"/></svg><svg class="a" style="left:186px;top:177px" width="16" height="14" viewBox="0 0 16 14"><path d="M0.5 1.2 Q0.5 0.5 1.2 0.5 H6 L7 2 H15 Q15.5 2 15.5 2.5 V13.3 Q15.5 13.5 15.3 13.5 H0.7 Q0.5 13.5 0.5 13.3 Z" fill="#55c2f5" stroke="#3eaae4" stroke-width="1"/><path d="M1 3 H15" stroke="#7bd3fb" stroke-width="1"/></svg><div class="t" style="left:208px;top:177px">src</div><div class="t" style="left:484px;top:177px;width:100px;text-align:right;color:#7b7b7b">3 KB</div><div class="t" style="left:609px;top:177px;color:#7b7b7b">9/18/13, 14:05</div><svg class="a" style="left:209px;top:195px" width="12" height="15" viewBox="0 0 12 15"><path d="M0.5 0.5 H7.5 L11.5 4.5 V14.5 H0.5 Z" fill="#fdfdfd" stroke="#c2c2c2" stroke-width="1"/><path d="M7.5 0.5 V4.5 H11.5" fill="#efefef" stroke="#c8c8c8" stroke-width="1"/><text x="1.2" y="12.8" font-family="Liberation Sans" font-weight="bold" font-size="9.5" fill="#3a1d78">c</text><path d="M5.8 10.5 H9 M7.5 9 V12 M9 10.5 H11.5 M10.5 9 V12" stroke="#3a1d78" stroke-width="1"/></svg><div class="t" style="left:229px;top:196px">main.cpp</div><div class="t" style="left:484px;top:196px;width:100px;text-align:right;color:#7b7b7b">415 bytes</div><div class="t" style="left:609px;top:196px;color:#7b7b7b">5/8/13, 21:58</div><svg class="a" style="left:209px;top:214px" width="12" height="15" viewBox="0 0 12 15"><path d="M0.5 0.5 H7.5 L11.5 4.5 V14.5 H0.5 Z" fill="#fdfdfd" stroke="#c2c2c2" stroke-width="1"/><path d="M7.5 0.5 V4.5 H11.5" fill="#efefef" stroke="#c8c8c8" stroke-width="1"/><text x="1.2" y="12.8" font-family="Liberation Sans" font-weight="bold" font-size="9.5" fill="#3a1d78">c</text><path d="M5.8 10.5 H9 M7.5 9 V12 M9 10.5 H11.5 M10.5 9 V12" stroke="#3a1d78" stroke-width="1"/></svg><div class="t" style="left:229px;top:215px">testApp.cpp</div><div class="t" style="left:484px;top:215px;width:100px;text-align:right;color:#7b7b7b">2 KB</div><div class="t" style="left:609px;top:215px;color:#7b7b7b">8/29/13, 10:11</div><svg class="a" style="left:209px;top:233px" width="12" height="15" viewBox="0 0 12 15"><path d="M0.5 0.5 H7.5 L11.5 4.5 V14.5 H0.5 Z" fill="#fdfdfd" stroke="#c2c2c2" stroke-width="1"/><path d="M7.5 0.5 V4.5 H11.5" fill="#efefef" stroke="#c8c8c8" stroke-width="1"/><text x="2" y="13" font-family="Liberation Sans" font-weight="bold" font-size="11.5" fill="#9b1b1b">h</text></svg><div class="t" style="left:229px;top:234px">testApp.h</div><div class="t" style="left:484px;top:234px;width:100px;text-align:right;color:#7b7b7b">899 bytes</div><div class="t" style="left:609px;top:234px;color:#7b7b7b">8/28/13, 17:14</div><svg class="a" style="left:147px;top:257px" width="9" height="8" viewBox="0 0 9 8"><path d="M0 0 H9 L4.5 8 Z" fill="#7f7f7f"/></svg><svg class="a" style="left:165px;top:253px" width="16" height="14" viewBox="0 0 16 14"><path d="M0.5 1.2 Q0.5 0.5 1.2 0.5 H6 L7 2 H15 Q15.5 2 15.5 2.5 V13.3 Q15.5 13.5 15.3 13.5 H0.7 Q0.5 13.5 0.5 13.3 Z" fill="#55c2f5" stroke="#3eaae4" stroke-width="1"/><path d="M1 3 H15" stroke="#7bd3fb" stroke-width="1"/></svg><div class="t" style="left:187px;top:253px">02-ShaderHorizDistortion</div><div class="t" style="left:484px;top:253px;width:100px;text-align:right;color:#7b7b7b">175 KB</div><div class="t" style="left:609px;top:253px;color:#7b7b7b">6/14/15, 14:18</div><svg class="a" style="left:168px;top:276px" width="9" height="8" viewBox="0 0 9 8"><path d="M0 0 H9 L4.5 8 Z" fill="#7f7f7f"/></svg><svg class="a" style="left:186px;top:272px" width="16" height="14" viewBox="0 0 16 14"><path d="M0.5 1.2 Q0.5 0.5 1.2 0.5 H6 L7 2 H15 Q15.5 2 15.5 2.5 V13.3 Q15.5 13.5 15.3 13.5 H0.7 Q0.5 13.5 0.5 13.3 Z" fill="#55c2f5" stroke="#3eaae4" stroke-width="1"/><path d="M1 3 H15" stroke="#7bd3fb" stroke-width="1"/></svg><div class="t" style="left:208px;top:272px">data</div><div class="t" style="left:484px;top:272px;width:100px;text-align:right;color:#7b7b7b">165 KB</div><div class="t" style="left:609px;top:272px;color:#7b7b7b">9/18/13, 14:05</div><svg class="a" style="left:209px;top:290px" width="12" height="15" viewBox="0 0 12 15"><path d="M0.5 0.5 H7.5 L11.5 4.5 V14.5 H0.5 Z" fill="#fdfdfd" stroke="#c2c2c2" stroke-width="1"/><path d="M7.5 0.5 V4.5 H11.5" fill="#efefef" stroke="#c8c8c8" stroke-width="1"/><text x="2.3" y="12.8" font-family="Liberation Sans" font-weight="bold" font-size="10" fill="#3a1d78">c</text></svg><div class="t" style="left:229px;top:291px">shaderFrag.c</div><div class="t" style="left:484px;top:291px;width:100px;text-align:right;color:#7b7b7b">592 bytes</div><div class="t" style="left:609px;top:291px;color:#7b7b7b">7/24/13, 14:02</div><svg class="a" style="left:209px;top:309px" width="12" height="15" viewBox="0 0 12 15"><path d="M0.5 0.5 H7.5 L11.5 4.5 V14.5 H0.5 Z" fill="#fdfdfd" stroke="#c2c2c2" stroke-width="1"/><path d="M7.5 0.5 V4.5 H11.5" fill="#efefef" stroke="#c8c8c8" stroke-width="1"/><text x="2.3" y="12.8" font-family="Liberation Sans" font-weight="bold" font-size="10" fill="#3a1d78">c</text></svg><div class="t" style="left:229px;top:310px">shaderVert.c</div><div class="t" style="left:484px;top:310px;width:100px;text-align:right;color:#7b7b7b">244 bytes</div><div class="t" style="left:609px;top:310px;color:#7b7b7b">7/24/13, 13:30</div><svg class="a" style="left:209px;top:328px" width="12" height="15" viewBox="0 0 12 15"><path d="M0.5 0.5 H7.5 L11.5 4.5 V14.5 H0.5 Z" fill="#fdfdfd" stroke="#c2c2c2" stroke-width="1"/><path d="M7.5 0.5 V4.5 H11.5" fill="#efefef" stroke="#c8c8c8" stroke-width="1"/><rect x="1.5" y="7.5" width="8" height="4" fill="#6f8fbf"/><ellipse cx="6.5" cy="11.3" rx="3" ry="1.6" fill="#7a6a5a"/></svg><div class="t" style="left:229px;top:329px">sunflower.png</div><div class="t" style="left:484px;top:329px;width:100px;text-align:right;color:#7b7b7b">164 KB</div><div class="t" style="left:609px;top:329px;color:#7b7b7b">2/26/13, 15:10</div><svg class="a" style="left:168px;top:352px" width="9" height="8" viewBox="0 0 9 8"><path d="M0 0 H9 L4.5 8 Z" fill="#7f7f7f"/></svg><svg class="a" style="left:186px;top:348px" width="16" height="14" viewBox="0 0 16 14"><path d="M0.5 1.2 Q0.5 0.5 1.2 0.5 H6 L7 2 H15 Q15.5 2 15.5 2.5 V13.3 Q15.5 13.5 15.3 13.5 H0.7 Q0.5 13.5 0.5 13.3 Z" fill="#55c2f5" stroke="#3eaae4" stroke-width="1"/><path d="M1 3 H15" stroke="#7bd3fb" stroke-width="1"/></svg><div class="t" style="left:208px;top:348px">src</div><div class="t" style="left:484px;top:348px;width:100px;text-align:right;color:#7b7b7b">4 KB</div><div class="t" style="left:609px;top:348px;color:#7b7b7b">9/18/13, 14:05</div><svg class="a" style="left:209px;top:366px" width="12" height="15" viewBox="0 0 12 15"><path d="M0.5 0.5 H7.5 L11.5 4.5 V14.5 H0.5 Z" fill="#fdfdfd" stroke="#c2c2c2" stroke-width="1"/><path d="M7.5 0.5 V4.5 H11.5" fill="#efefef" stroke="#c8c8c8" stroke-width="1"/><text x="1.2" y="12.8" font-family="Liberation Sans" font-weight="bold" font-size="9.5" fill="#3a1d78">c</text><path d="M5.8 10.5 H9 M7.5 9 V12 M9 10.5 H11.5 M10.5 9 V12" stroke="#3a1d78" stroke-width="1"/></svg><div class="t" style="left:229px;top:367px">main.cpp</div><div class="t" style="left:484px;top:367px;width:100px;text-align:right;color:#7b7b7b">415 bytes</div><div class="t" style="left:609px;top:367px;color:#7b7b7b">5/8/13, 21:58</div><svg class="a" style="left:209px;top:385px" width="12" height="15" viewBox="0 0 12 15"><path d="M0.5 0.5 H7.5 L11.5 4.5 V14.5 H0.5 Z" fill="#fdfdfd" stroke="#c2c2c2" stroke-width="1"/><path d="M7.5 0.5 V4.5 H11.5" fill="#efefef" stroke="#c8c8c8" stroke-width="1"/><text x="1.2" y="12.8" font-family="Liberation Sans" font-weight="bold" font-size="9.5" fill="#3a1d78">c</text><path d="M5.8 10.5 H9 M7.5 9 V12 M9 10.5 H11.5 M10.5 9 V12" stroke="#3a1d78" stroke-width="1"/></svg><div class="t" style="left:229px;top:386px">testApp.cpp</div><div class="t" style="left:484px;top:386px;width:100px;text-align:right;color:#7b7b7b">2 KB</div><div class="t" style="left:609px;top:386px;color:#7b7b7b">8/29/13, 10:11</div><svg class="a" style="left:209px;top:404px" width="12" height="15" viewBox="0 0 12 15"><path d="M0.5 0.5 H7.5 L11.5 4.5 V14.5 H0.5 Z" fill="#fdfdfd" stroke="#c2c2c2" stroke-width="1"/><path d="M7.5 0.5 V4.5 H11.5" fill="#efefef" stroke="#c8c8c8" stroke-width="1"/><text x="2" y="13" font-family="Liberation Sans" font-weight="bold" font-size="11.5" fill="#9b1b1b">h</text></svg><div class="t" style="left:229px;top:405px">testApp.h</div><div class="t" style="left:484px;top:405px;width:100px;text-align:right;color:#7b7b7b">1 KB</div><div class="t" style="left:609px;top:405px;color:#7b7b7b">7/24/13, 16:02</div><svg class="a" style="left:148px;top:427px" width="8" height="9" viewBox="0 0 8 9"><path d="M0 0 L8 4.5 L0 9 Z" fill="#7f7f7f"/></svg><svg class="a" style="left:165px;top:424px" width="16" height="14" viewBox="0 0 16 14"><path d="M0.5 1.2 Q0.5 0.5 1.2 0.5 H6 L7 2 H15 Q15.5 2 15.5 2.5 V13.3 Q15.5 13.5 15.3 13.5 H0.7 Q0.5 13.5 0.5 13.3 Z" fill="#55c2f5" stroke="#3eaae4" stroke-width="1"/><path d="M1 3 H15" stroke="#7bd3fb" stroke-width="1"/></svg><div class="t" style="left:187px;top:424px">03-ShaderLiquify</div><div class="t" style="left:484px;top:424px;width:100px;text-align:right;color:#7b7b7b">179 KB</div><div class="t" style="left:609px;top:424px;color:#7b7b7b">6/14/15, 14:18</div><svg class="a" style="left:148px;top:446px" width="8" height="9" viewBox="0 0 8 9"><path d="M0 0 L8 4.5 L0 9 Z" fill="#7f7f7f"/></svg><svg class="a" style="left:165px;top:443px" width="16" height="14" viewBox="0 0 16 14"><path d="M0.5 1.2 Q0.5 0.5 1.2 0.5 H6 L7 2 H15 Q15.5 2 15.5 2.5 V13.3 Q15.5 13.5 15.3 13.5 H0.7 Q0.5 13.5 0.5 13.3 Z" fill="#55c2f5" stroke="#3eaae4" stroke-width="1"/><path d="M1 3 H15" stroke="#7bd3fb" stroke-width="1"/></svg><div class="t" style="left:187px;top:443px">04-ShaderMasking</div><div class="t" style="left:484px;top:443px;width:100px;text-align:right;color:#7b7b7b">169 KB</div><div class="t" style="left:609px;top:443px;color:#7b7b7b">9/18/13, 14:05</div><svg class="a" style="left:148px;top:465px" width="8" height="9" viewBox="0 0 8 9"><path d="M0 0 L8 4.5 L0 9 Z" fill="#7f7f7f"/></svg><svg class="a" style="left:165px;top:462px" width="16" height="14" viewBox="0 0 16 14"><path d="M0.5 1.2 Q0.5 0.5 1.2 0.5 H6 L7 2 H15 Q15.5 2 15.5 2.5 V13.3 Q15.5 13.5 15.3 13.5 H0.7 Q0.5 13.5 0.5 13.3 Z" fill="#55c2f5" stroke="#3eaae4" stroke-width="1"/><path d="M1 3 H15" stroke="#7bd3fb" stroke-width="1"/></svg><div class="t" style="left:187px;top:462px">05-ShaderAudioReactive</div><div class="t" style="left:484px;top:462px;width:100px;text-align:right;color:#7b7b7b">2.6 MB</div><div class="t" style="left:609px;top:462px;color:#7b7b7b">9/18/13, 14:05</div><svg class="a" style="left:148px;top:484px" width="8" height="9" viewBox="0 0 8 9"><path d="M0 0 L8 4.5 L0 9 Z" fill="#7f7f7f"/></svg><svg class="a" style="left:165px;top:481px" width="16" height="14" viewBox="0 0 16 14"><path d="M0.5 1.2 Q0.5 0.5 1.2 0.5 H6 L7 2 H15 Q15.5 2 15.5 2.5 V13.3 Q15.5 13.5 15.3 13.5 H0.7 Q0.5 13.5 0.5 13.3 Z" fill="#55c2f5" stroke="#3eaae4" stroke-width="1"/><path d="M1 3 H15" stroke="#7bd3fb" stroke-width="1"/></svg><div class="t" style="left:187px;top:481px">06-VertexDeformation</div><div class="t" style="left:484px;top:481px;width:100px;text-align:right;color:#7b7b7b">6 KB</div><div class="t" style="left:609px;top:481px;color:#7b7b7b">9/18/13, 14:05</div><svg class="a" style="left:148px;top:503px" width="8" height="9" viewBox="0 0 8 9"><path d="M0 0 L8 4.5 L0 9 Z" fill="#7f7f7f"/></svg><svg class="a" style="left:165px;top:500px" width="16" height="14" viewBox="0 0 16 14"><path d="M0.5 1.2 Q0.5 0.5 1.2 0.5 H6 L7 2 H15 Q15.5 2 15.5 2.5 V13.3 Q15.5 13.5 15.3 13.5 H0.7 Q0.5 13.5 0.5 13.3 Z" fill="#55c2f5" stroke="#3eaae4" stroke-width="1"/><path d="M1 3 H15" stroke="#7bd3fb" stroke-width="1"/></svg><div class="t" style="left:187px;top:500px">07-GeometryFurryCarpet</div><div class="t" style="left:484px;top:500px;width:100px;text-align:right;color:#7b7b7b">138 KB</div><div class="t" style="left:609px;top:500px;color:#7b7b7b">9/18/13, 14:05</div><svg class="a" style="left:167px;top:518px" width="12" height="15" viewBox="0 0 12 15"><path d="M0.5 0.5 H7.5 L11.5 4.5 V14.5 H0.5 Z" fill="#fdfdfd" stroke="#c2c2c2" stroke-width="1"/><path d="M7.5 0.5 V4.5 H11.5" fill="#efefef" stroke="#c8c8c8" stroke-width="1"/><path d="M5 0.5 V8" stroke="#222" stroke-width="1.3"/><rect x="4.2" y="7.5" width="1.6" height="2.5" fill="#222"/></svg><div class="t" style="left:187px;top:519px">webgl-noise.zip</div><div class="t" style="left:484px;top:519px;width:100px;text-align:right;color:#7b7b7b">211 KB</div><div class="t" style="left:609px;top:519px;color:#7b7b7b">5/25/13, 22:31</div><div class="a" style="left:0;top:548px;width:806px;height:1px;background:#a9a9a9"></div><div class="a" style="left:0;top:549px;width:806px;height:20px;background:linear-gradient(180deg,#e6e6e6,#d8d8d8)"></div><div class="t" style="left:326px;top:553px;font-size:12px;color:#555">24 items, 56.95 GB available</div></div></body></html>
